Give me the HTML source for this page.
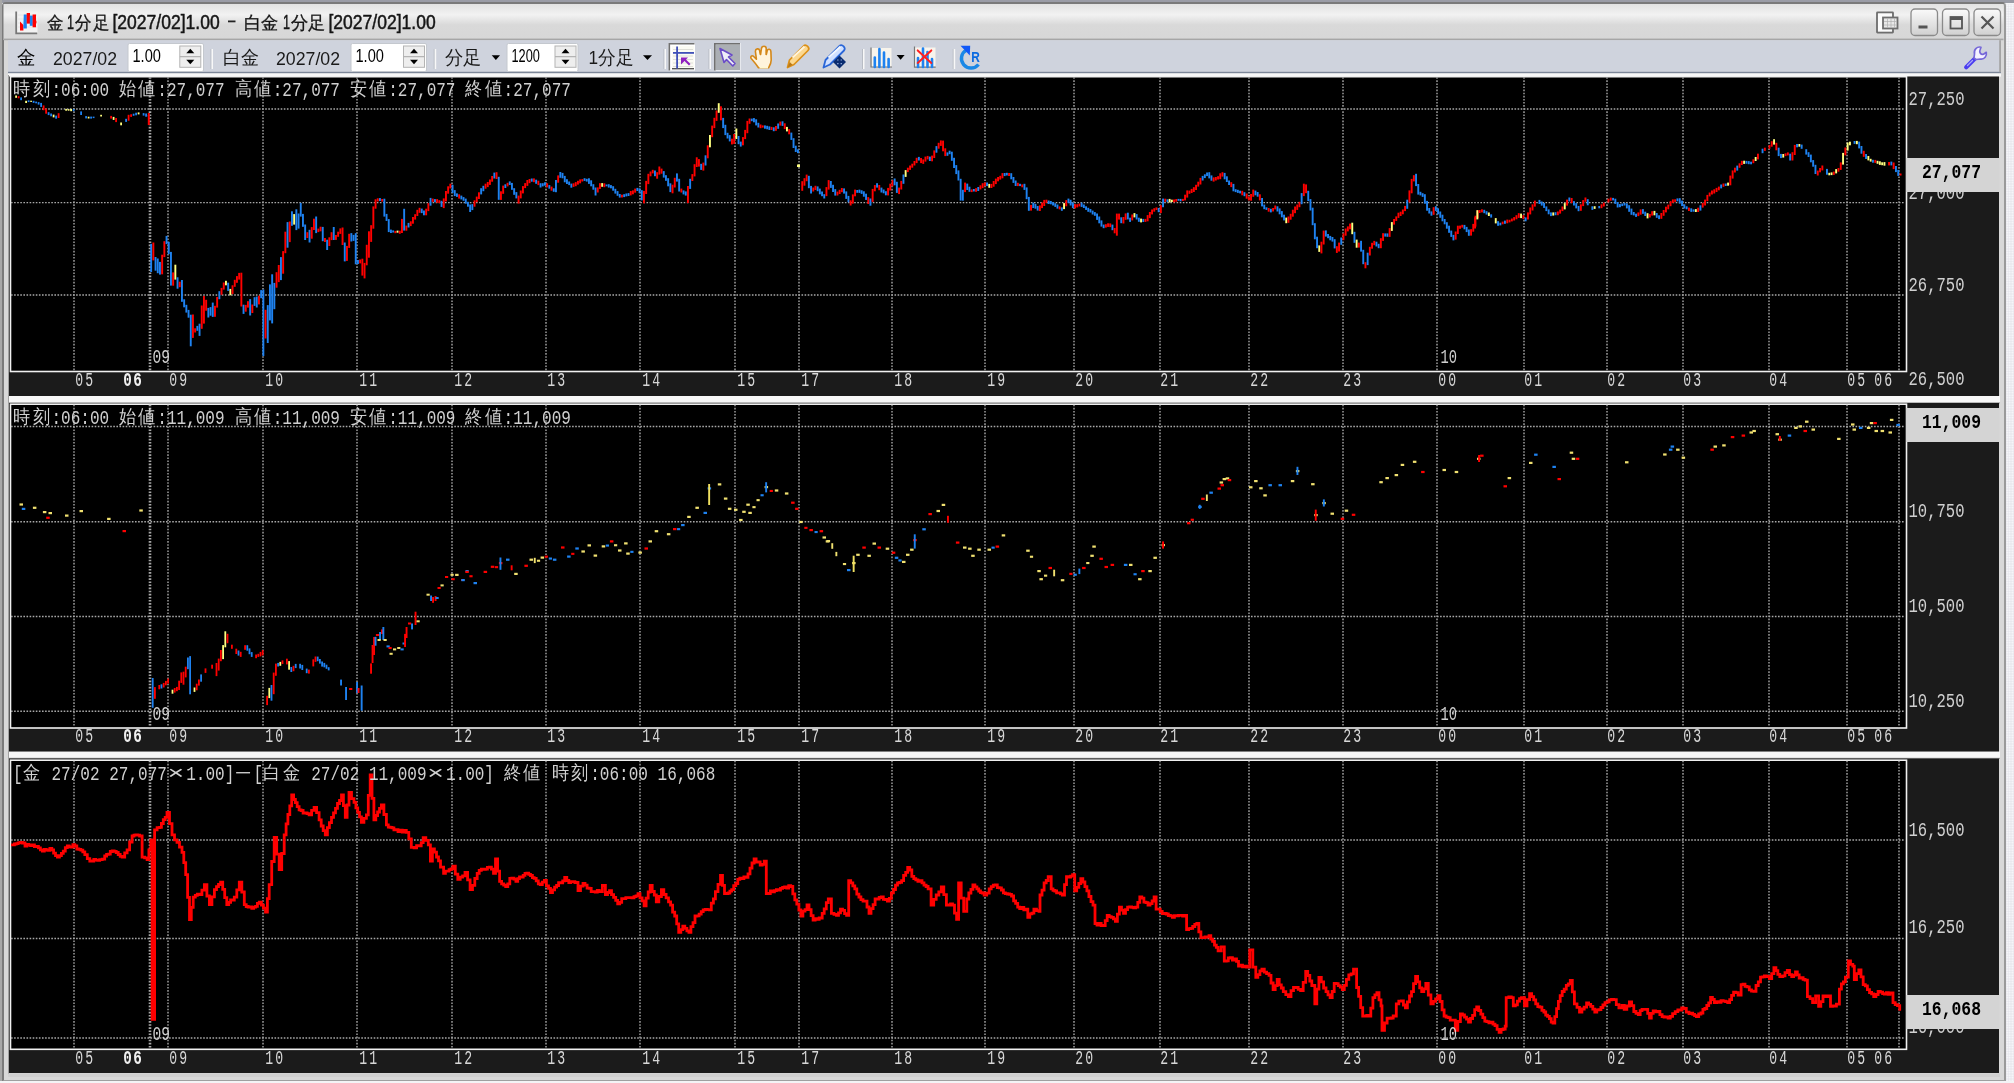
<!DOCTYPE html>
<html><head><meta charset="utf-8">
<style>
html,body{margin:0;padding:0;}
body{width:2014px;height:1083px;position:relative;overflow:hidden;background:#f4f4f6;font-family:"Liberation Sans",sans-serif;}
.abs{position:absolute;}
#topband{left:0;top:0;width:2014px;height:3px;background:#9a9ca6;}
#leftband{left:0;top:0;width:2px;height:1081px;background:#a8a8a8;}
#rightpat{left:2006px;top:4px;width:8px;height:1077px;background-color:#e8e8ee;background-image:radial-gradient(circle,#ffffff 0.7px,transparent 0.9px);background-size:2.5px 2.5px;}
#win{left:1.5px;top:2px;width:2000.5px;height:1076px;background:#d8d8d8;border-left:2px solid #7a7a7a;border-top:2px solid #7a7a7a;border-right:2px solid #9a9a9a;border-bottom:1.5px solid #a0a0a0;border-radius:4px 4px 0 0;}
#title{left:3px;top:3px;width:2000px;height:36px;background:linear-gradient(#f6f6f6,#e4e4e4 50%,#d6d6d6);border-radius:4px 4px 0 0;}
#toolbar{left:8px;top:40px;width:1993px;height:33px;background:#d1d5dd;border-top:1px solid #a9acb3;border-bottom:2px solid #8f96a6;box-sizing:border-box;}
.ax,.sc,.pl,.info,.mk{font-family:"Liberation Mono",monospace;}
.g{stroke:#a8a8a8;stroke-width:1.4;stroke-dasharray:1.6 1.5;}
.ax{fill:#d8d8d8;font-size:20px;}
.bd{font-weight:bold;fill:#f0f0f0;}
.sc{fill:#d0d0d0;font-size:21px;}
.pl{fill:#000;font-size:21px;font-weight:bold;}
.info{fill:#d0d0d0;font-size:21px;}
.mk{fill:#d0d0d0;font-size:21px;}
</style></head><body>
<div id="topband" class="abs"></div>
<div id="leftband" class="abs"></div>
<div id="win" class="abs"></div>
<div id="rightpat" class="abs"></div>
<svg class="abs" style="left:0;top:0;will-change:transform" width="2014" height="1083" viewBox="0 0 2014 1083">
<defs><clipPath id="c1"><rect x="11" y="77" width="1895" height="294"/></clipPath>
<clipPath id="c2"><rect x="11" y="405" width="1895" height="322"/></clipPath>
<clipPath id="c3"><rect x="11" y="762" width="1895" height="286"/></clipPath></defs>
<defs><linearGradient id="tg" x1="0" y1="0" x2="0" y2="1"><stop offset="0" stop-color="#e2e2e2"/><stop offset="0.3" stop-color="#f2f2f2"/><stop offset="0.58" stop-color="#d9d9d9"/><stop offset="1" stop-color="#d7d7d7"/></linearGradient><linearGradient id="bg" x1="0" y1="0" x2="0" y2="1"><stop offset="0" stop-color="#fafafa"/><stop offset="1" stop-color="#d0d0d0"/></linearGradient></defs>
<rect x="3.5" y="4" width="2000" height="36" fill="url(#tg)"/>
<rect x="16" y="11.5" width="21.5" height="21.5" fill="#f2f2f2"/><path d="M18,15 H37 M18,19 H37 M18,23 H37 M18,27 H37" stroke="#e0e0e0" stroke-width="0.8"/><path d="M16.2,11.5 V33.3 H37.2" fill="none" stroke="#777" stroke-width="1.8"/><path d="M20,30.6 L20,21.5 L23.4,25 L23.4,30.6 Z" fill="#ff0000"/><path d="M23.3,28.6 L23.8,14.6 L26.8,14.6 L26.8,28.6 Z" fill="#1a82f0"/><rect x="26.7" y="13" width="3.3" height="10.6" fill="#ff0000"/><rect x="29.8" y="15.6" width="3" height="10.2" fill="#1a82f0"/><path d="M32.6,14.4 H36 V20 L36.6,22 L36,24 V27.2 H32.6 Z" fill="#ff0000"/>
<text x="47" y="28.6" style="font-family:'Liberation Sans'" font-size="18" fill="#151515" font-weight="normal" text-anchor="start" textLength="16.5" lengthAdjust="spacingAndGlyphs" stroke="#151515" stroke-width="0.3">金</text>
<text x="67" y="28.6" style="font-family:'Liberation Sans'" font-size="20.5" fill="#151515" font-weight="normal" text-anchor="start" textLength="7.0" lengthAdjust="spacingAndGlyphs" stroke="#151515" stroke-width="0.5">1</text>
<text x="75" y="28.6" style="font-family:'Liberation Sans'" font-size="18" fill="#151515" font-weight="normal" text-anchor="start" textLength="16.5" lengthAdjust="spacingAndGlyphs" stroke="#151515" stroke-width="0.3">分</text>
<text x="92.5" y="28.6" style="font-family:'Liberation Sans'" font-size="18" fill="#151515" font-weight="normal" text-anchor="start" textLength="16.5" lengthAdjust="spacingAndGlyphs" stroke="#151515" stroke-width="0.3">足</text>
<text x="112.5" y="28.6" style="font-family:'Liberation Sans'" font-size="20.5" fill="#151515" font-weight="normal" text-anchor="start" textLength="107.2" lengthAdjust="spacingAndGlyphs" stroke="#151515" stroke-width="0.5">[2027/02]1.00</text>
<rect x="228" y="20.5" width="7.5" height="1.8" fill="#222"/>
<text x="244" y="28.6" style="font-family:'Liberation Sans'" font-size="18" fill="#151515" font-weight="normal" text-anchor="start" textLength="34.5" lengthAdjust="spacingAndGlyphs" stroke="#151515" stroke-width="0.3">白金</text>
<text x="283" y="28.6" style="font-family:'Liberation Sans'" font-size="20.5" fill="#151515" font-weight="normal" text-anchor="start" textLength="7.0" lengthAdjust="spacingAndGlyphs" stroke="#151515" stroke-width="0.5">1</text>
<text x="290.5" y="28.6" style="font-family:'Liberation Sans'" font-size="18" fill="#151515" font-weight="normal" text-anchor="start" textLength="34.5" lengthAdjust="spacingAndGlyphs" stroke="#151515" stroke-width="0.3">分足</text>
<text x="328.5" y="28.6" style="font-family:'Liberation Sans'" font-size="20.5" fill="#151515" font-weight="normal" text-anchor="start" textLength="107.2" lengthAdjust="spacingAndGlyphs" stroke="#151515" stroke-width="0.5">[2027/02]1.00</text>
<g fill="none" stroke="#6e6e6e" stroke-width="1.8"><rect x="1877" y="12.5" width="16" height="20" rx="0.5"/></g><rect x="1878" y="13.5" width="14" height="18" fill="#fbfbfb"/><rect x="1883" y="17.5" width="14.5" height="11" fill="#e8e8e8" stroke="#6e6e6e" stroke-width="1.8"/><path d="M1884,21.5 H1897 M1884,25 H1897 M1887.5,18.5 V28 M1891,18.5 V28 M1894.5,18.5 V28" stroke="#b0b0b0" stroke-width="0.7"/>
<rect x="1911" y="9" width="26.5" height="26.5" rx="4" fill="url(#bg)" stroke="#8a8a8a" stroke-width="1.3"/>
<rect x="1942.5" y="9" width="26.5" height="26.5" rx="4" fill="url(#bg)" stroke="#8a8a8a" stroke-width="1.3"/>
<rect x="1974" y="9" width="26.5" height="26.5" rx="4" fill="url(#bg)" stroke="#8a8a8a" stroke-width="1.3"/>
<rect x="1918.5" y="25.5" width="9" height="3" fill="#555"/>
<rect x="1950.5" y="17" width="11.5" height="11.5" fill="none" stroke="#555" stroke-width="1.8"/><rect x="1950.5" y="17" width="11.5" height="3" fill="#555"/>
<path d="M1981.5,16.5 L1993.5,28.5 M1993.5,16.5 L1981.5,28.5" stroke="#555" stroke-width="2.2"/>
<rect x="3.5" y="38.6" width="2000" height="1.6" fill="#a6a6a6"/>
<rect x="8" y="40.2" width="1993" height="31.8" fill="#cfd3dd"/>
<rect x="8" y="71.8" width="1993" height="1.6" fill="#7c8698"/>
<rect x="8" y="73.4" width="1993" height="3.2" fill="#f8f8f8"/>
<text x="17" y="63.8" style="font-family:'Liberation Sans'" font-size="18.5" fill="#000" font-weight="normal" text-anchor="start" textLength="18.5" lengthAdjust="spacingAndGlyphs">金</text>
<text x="53" y="64.8" style="font-family:'Liberation Sans'" font-size="18" fill="#1a1a1a" font-weight="normal" text-anchor="start" textLength="64.0" lengthAdjust="spacingAndGlyphs">2027/02</text>
<rect x="128.0" y="43.5" width="75.5" height="28" rx="1.5" fill="#ffffff" stroke="#c4c8ce" stroke-width="1"/><text x="132.5" y="61.8" style="font-family:'Liberation Sans'" font-size="19" fill="#000" font-weight="normal" text-anchor="start" textLength="28.4" lengthAdjust="spacingAndGlyphs">1.00</text><rect x="179.8" y="46" width="21" height="21.3" fill="#eeeeee" stroke="#b4b4b4" stroke-width="1"/><line x1="179.8" y1="56.65" x2="200.8" y2="56.65" stroke="#b0b0b0" stroke-width="1.2"/><path d="M186.3,53.15 L194.3,53.15 L190.3,48.65 Z" fill="#000"/><path d="M186.3,59.65 L194.3,59.65 L190.3,64.15 Z" fill="#000"/>
<rect x="210.5" y="49" width="1" height="20" fill="#b8bcc4"/><rect x="211.5" y="49" width="1.5" height="20" fill="#f8f8f8"/>
<text x="223" y="63.8" style="font-family:'Liberation Sans'" font-size="18.5" fill="#1a1a1a" font-weight="normal" text-anchor="start" textLength="36.0" lengthAdjust="spacingAndGlyphs">白金</text>
<text x="276" y="64.8" style="font-family:'Liberation Sans'" font-size="18" fill="#1a1a1a" font-weight="normal" text-anchor="start" textLength="64.0" lengthAdjust="spacingAndGlyphs">2027/02</text>
<rect x="351.0" y="43.5" width="75.5" height="28" rx="1.5" fill="#ffffff" stroke="#c4c8ce" stroke-width="1"/><text x="355.5" y="61.8" style="font-family:'Liberation Sans'" font-size="19" fill="#000" font-weight="normal" text-anchor="start" textLength="28.4" lengthAdjust="spacingAndGlyphs">1.00</text><rect x="403.5" y="46" width="21" height="21.3" fill="#eeeeee" stroke="#b4b4b4" stroke-width="1"/><line x1="403.5" y1="56.65" x2="424.5" y2="56.65" stroke="#b0b0b0" stroke-width="1.2"/><path d="M410.0,53.15 L418.0,53.15 L414.0,48.65 Z" fill="#000"/><path d="M410.0,59.65 L418.0,59.65 L414.0,64.15 Z" fill="#000"/>
<rect x="433.7" y="49" width="1" height="20" fill="#b8bcc4"/><rect x="434.7" y="49" width="1.5" height="20" fill="#f8f8f8"/>
<text x="445" y="63.8" style="font-family:'Liberation Sans'" font-size="18.5" fill="#1a1a1a" font-weight="normal" text-anchor="start" textLength="36.5" lengthAdjust="spacingAndGlyphs">分足</text>
<path d="M491.7,55.2 L500,55.2 L495.85,60 Z" fill="#000"/>
<rect x="507.0" y="43.5" width="71.0" height="28" rx="1.5" fill="#ffffff" stroke="#c4c8ce" stroke-width="1"/><text x="511.5" y="61.8" style="font-family:'Liberation Sans'" font-size="19" fill="#000" font-weight="normal" text-anchor="start" textLength="28.4" lengthAdjust="spacingAndGlyphs">1200</text><rect x="555" y="46" width="21" height="21.3" fill="#eeeeee" stroke="#b4b4b4" stroke-width="1"/><line x1="555" y1="56.65" x2="576" y2="56.65" stroke="#b0b0b0" stroke-width="1.2"/><path d="M561.5,53.15 L569.5,53.15 L565.5,48.65 Z" fill="#000"/><path d="M561.5,59.65 L569.5,59.65 L565.5,64.15 Z" fill="#000"/>
<text x="588.5" y="63.8" style="font-family:'Liberation Sans'" font-size="18.5" fill="#1a1a1a" font-weight="normal" text-anchor="start" textLength="45.0" lengthAdjust="spacingAndGlyphs">1分足</text>
<path d="M643,55.2 L652,55.2 L647.5,60 Z" fill="#000"/>
<rect x="663.5" y="49" width="1" height="20" fill="#b8bcc4"/><rect x="664.5" y="49" width="1.5" height="20" fill="#f8f8f8"/>
<rect x="668.5" y="43" width="26.5" height="27.5" fill="#ffffff"/><path d="M669.3,70.5 V43.8 H694.5" fill="none" stroke="#707070" stroke-width="1.6"/><rect x="672" y="46" width="22" height="22.5" fill="#fbfbf4"/><path d="M673,49.5 H693 M673,56 H693 M673,59.5 H693 M673,63 H693 M673,66.5 H693" stroke="#d8d8d0" stroke-width="0.8"/><rect x="672" y="68" width="22" height="1.4" fill="#555"/><rect x="676.2" y="46.5" width="1.8" height="22" fill="#4050b8"/><rect x="673" y="52" width="21" height="1.8" fill="#4050b8"/><path d="M681,57.5 L688,57.5 L686,59.5 L690.5,64 L689,65.5 L684.5,61 L681,64.5 Z" fill="#9020c0"/>
<rect x="708.5" y="49" width="1" height="20" fill="#b8bcc4"/><rect x="709.5" y="49" width="1.5" height="20" fill="#f8f8f8"/>
<rect x="714" y="43" width="26.5" height="27.5" fill="#ffffff"/><rect x="715.5" y="44.5" width="24.5" height="25.5" fill="#abafb4"/><path d="M714.8,70.5 V43.8 H740" fill="none" stroke="#707070" stroke-width="1.6"/><path d="M720,48.5 L732,55 L728.5,57 L735,63.5 L732.8,66 L726.5,59.5 L724,62.5 Z" fill="#eeeef8" stroke="#6a4cc8" stroke-width="1.6" stroke-linejoin="round"/>
<path d="M758.5,67.8 C756,64 753,60.5 751.2,58.5 C750.2,57 751.5,55 753.4,56.2 L756.4,59.2 L755.4,51.5 C755.2,48.3 759.2,48 759.6,50.6 L760.6,54.5 L761.4,48.6 C761.8,45.4 766.2,45.4 766.2,48.6 L766.3,54.5 L767.2,50.8 C767.8,48.4 771,48.8 770.9,51.6 L771.2,60 C771.2,63 770,65.5 768.6,67.8 Z" fill="#fff4dc" stroke="#d4881a" stroke-width="1.6" stroke-linejoin="round"/><path d="M760.4,55 L759.8,50.8 M766.2,55 L766.3,50" stroke="#d4881a" stroke-width="1.1"/><rect x="759.5" y="66.8" width="8.5" height="1.6" fill="#fff8d0"/>
<path d="M787.5,67.5 L789.5,60 L803.5,46 C806,43.5 810.5,48 808,50.5 L794,64.5 Z" fill="#fcd890" stroke="#dc9018" stroke-width="1.7" stroke-linejoin="round"/><path d="M792.5,57.5 L804.5,46.5" stroke="#fff4dc" stroke-width="1.8"/><path d="M787.5,67.5 L789.8,62 L792.5,64.7 Z" fill="#b87818"/>
<path d="M823.5,67.5 L825.5,60 L839.5,46 C842,43.5 846.5,48 844,50.5 L830,64.5 Z" fill="#d0e0ff" stroke="#2a66d8" stroke-width="1.8" stroke-linejoin="round"/><path d="M828.5,57.5 L840.5,46.5" stroke="#f4f8ff" stroke-width="1.8"/><path d="M839.5,55.5 L846,62 L839.5,68.5 L833,62 Z" fill="#0a2c70"/><path d="M837.2,60 h1.3 M840.6,60 h1.3 M837.2,63.6 h1.3 M840.6,63.6 h1.3" stroke="#9ab0e0" stroke-width="1.1"/>
<rect x="862" y="49" width="1" height="20" fill="#b8bcc4"/><rect x="863" y="49" width="1.5" height="20" fill="#f8f8f8"/>
<rect x="871.5" y="48" width="20" height="19" fill="#f8f4ec"/><path d="M871,47.5 V67 H892" fill="none" stroke="#777" stroke-width="1.2"/><path d="M874.8,67 V57.5 M879.4,67 V49 M884,67 V52.5 M888.6,67 V59" stroke="#1e82f0" stroke-width="2.6" stroke-linecap="round"/>
<path d="M896.6,55 L904.6,55 L900.6,59.8 Z" fill="#000"/>
<rect x="915" y="47.5" width="20.5" height="19.5" fill="#f8f4ec"/><path d="M914.5,46.5 V67.2 H935.7" fill="none" stroke="#777" stroke-width="1.2"/><path d="M918,67 V58 M923,67 V48.5 M927.5,67 V52 M932,67 V59" stroke="#1e82f0" stroke-width="2.6" stroke-linecap="round"/><path d="M917.7,50.4 L931.3,62.9 M931.3,50.4 L917.7,62.9" stroke="#ff2020" stroke-width="2" stroke-linecap="round"/>
<rect x="952.7" y="49" width="1" height="20" fill="#b8bcc4"/><rect x="953.7" y="49" width="1.5" height="20" fill="#f8f8f8"/>
<path d="M966.5,50 A9.6,9.6 0 1 0 978.5,64.5" fill="none" stroke="#1a88e6" stroke-width="3.4"/><path d="M960.5,45.8 L970.2,45.8 L969.8,55.5 Z" fill="#1058f8"/><text x="971.2" y="61.8" style="font-family:'Liberation Sans'" font-size="15.5" fill="#0a6ae0" font-weight="bold" text-anchor="start" textLength="8.6" lengthAdjust="spacingAndGlyphs">R</text>
<path d="M1966.2,67.2 L1975.5,58" stroke="#4a3cf0" stroke-width="4.2" stroke-linecap="round"/><path d="M1967.5,65.5 L1972.5,60.5" stroke="#a8a4f8" stroke-width="1.3" stroke-linecap="round"/><path d="M1981,47.2 C1977,46.2 1973.5,49.5 1974.5,54 L1974,58 L1976,59.5 L1980.5,59 C1984.5,59.5 1987,56 1986.3,52.3 L1983.5,54.2 C1981,55 1979,52.5 1980,50 Z" fill="#f4f2ff" stroke="#7668d8" stroke-width="1.7" stroke-linejoin="round"/>
<rect x="1999.2" y="40.2" width="1.8" height="32" fill="#a4a4a4"/>
<rect x="9" y="396" width="1991" height="7" fill="#f8f8f8"/><rect x="9" y="402.3" width="1991" height="1.2" fill="#a0a0a0"/>
<rect x="9" y="751.5" width="1991" height="7" fill="#f8f8f8"/><rect x="9" y="757.8" width="1991" height="1.2" fill="#a0a0a0"/>
<rect x="8" y="75" width="1" height="1000" fill="#a0a0a0"/><rect x="8" y="1073.5" width="1992" height="3.5" fill="#d0d0d0"/>
<rect x="9" y="76.5" width="1990" height="319.5" fill="#1b1b1b"/>
<rect x="10.5" y="76.7" width="1896" height="294.8" fill="#000" stroke="#f0f0f0" stroke-width="1.6"/>
<line x1="11" y1="109" x2="1905" y2="109" class="g"/>
<line x1="11" y1="202.6" x2="1905" y2="202.6" class="g"/>
<line x1="11" y1="295" x2="1905" y2="295" class="g"/>
<line x1="74" y1="77.2" x2="74" y2="371" class="g"/>
<line x1="150" y1="77.2" x2="150" y2="371" class="g" style="stroke-width:2.6"/>
<line x1="168" y1="77.2" x2="168" y2="371" class="g"/>
<line x1="263" y1="77.2" x2="263" y2="371" class="g"/>
<line x1="357" y1="77.2" x2="357" y2="371" class="g"/>
<line x1="452" y1="77.2" x2="452" y2="371" class="g"/>
<line x1="546" y1="77.2" x2="546" y2="371" class="g"/>
<line x1="640" y1="77.2" x2="640" y2="371" class="g"/>
<line x1="735" y1="77.2" x2="735" y2="371" class="g"/>
<line x1="799" y1="77.2" x2="799" y2="371" class="g"/>
<line x1="892" y1="77.2" x2="892" y2="371" class="g"/>
<line x1="985" y1="77.2" x2="985" y2="371" class="g"/>
<line x1="1074" y1="77.2" x2="1074" y2="371" class="g"/>
<line x1="1160" y1="77.2" x2="1160" y2="371" class="g"/>
<line x1="1249" y1="77.2" x2="1249" y2="371" class="g"/>
<line x1="1343" y1="77.2" x2="1343" y2="371" class="g"/>
<line x1="1437" y1="77.2" x2="1437" y2="371" class="g"/>
<line x1="1524" y1="77.2" x2="1524" y2="371" class="g"/>
<line x1="1607" y1="77.2" x2="1607" y2="371" class="g"/>
<line x1="1683" y1="77.2" x2="1683" y2="371" class="g"/>
<line x1="1769" y1="77.2" x2="1769" y2="371" class="g"/>
<line x1="1847" y1="77.2" x2="1847" y2="371" class="g"/>
<line x1="1899" y1="77.2" x2="1899" y2="371" class="g"/>
<rect x="9" y="403" width="1990" height="348.5" fill="#1b1b1b"/>
<rect x="10.5" y="404.2" width="1896" height="323.8" fill="#000" stroke="#f0f0f0" stroke-width="1.6"/>
<line x1="11" y1="426.5" x2="1905" y2="426.5" class="g"/>
<line x1="11" y1="521.7" x2="1905" y2="521.7" class="g"/>
<line x1="11" y1="616.5" x2="1905" y2="616.5" class="g"/>
<line x1="11" y1="711.3" x2="1905" y2="711.3" class="g"/>
<line x1="74" y1="404.7" x2="74" y2="727.5" class="g"/>
<line x1="150" y1="404.7" x2="150" y2="727.5" class="g" style="stroke-width:2.6"/>
<line x1="168" y1="404.7" x2="168" y2="727.5" class="g"/>
<line x1="263" y1="404.7" x2="263" y2="727.5" class="g"/>
<line x1="357" y1="404.7" x2="357" y2="727.5" class="g"/>
<line x1="452" y1="404.7" x2="452" y2="727.5" class="g"/>
<line x1="546" y1="404.7" x2="546" y2="727.5" class="g"/>
<line x1="640" y1="404.7" x2="640" y2="727.5" class="g"/>
<line x1="735" y1="404.7" x2="735" y2="727.5" class="g"/>
<line x1="799" y1="404.7" x2="799" y2="727.5" class="g"/>
<line x1="892" y1="404.7" x2="892" y2="727.5" class="g"/>
<line x1="985" y1="404.7" x2="985" y2="727.5" class="g"/>
<line x1="1074" y1="404.7" x2="1074" y2="727.5" class="g"/>
<line x1="1160" y1="404.7" x2="1160" y2="727.5" class="g"/>
<line x1="1249" y1="404.7" x2="1249" y2="727.5" class="g"/>
<line x1="1343" y1="404.7" x2="1343" y2="727.5" class="g"/>
<line x1="1437" y1="404.7" x2="1437" y2="727.5" class="g"/>
<line x1="1524" y1="404.7" x2="1524" y2="727.5" class="g"/>
<line x1="1607" y1="404.7" x2="1607" y2="727.5" class="g"/>
<line x1="1683" y1="404.7" x2="1683" y2="727.5" class="g"/>
<line x1="1769" y1="404.7" x2="1769" y2="727.5" class="g"/>
<line x1="1847" y1="404.7" x2="1847" y2="727.5" class="g"/>
<line x1="1899" y1="404.7" x2="1899" y2="727.5" class="g"/>
<rect x="9" y="758.5" width="1990" height="314.5" fill="#1b1b1b"/>
<rect x="10.5" y="760.2" width="1896" height="289.0999999999999" fill="#000" stroke="#f0f0f0" stroke-width="1.6"/>
<line x1="11" y1="840" x2="1905" y2="840" class="g"/>
<line x1="11" y1="938.5" x2="1905" y2="938.5" class="g"/>
<line x1="11" y1="1038" x2="1905" y2="1038" class="g"/>
<line x1="74" y1="760.7" x2="74" y2="1048.8" class="g"/>
<line x1="150" y1="760.7" x2="150" y2="1048.8" class="g" style="stroke-width:2.6"/>
<line x1="168" y1="760.7" x2="168" y2="1048.8" class="g"/>
<line x1="263" y1="760.7" x2="263" y2="1048.8" class="g"/>
<line x1="357" y1="760.7" x2="357" y2="1048.8" class="g"/>
<line x1="452" y1="760.7" x2="452" y2="1048.8" class="g"/>
<line x1="546" y1="760.7" x2="546" y2="1048.8" class="g"/>
<line x1="640" y1="760.7" x2="640" y2="1048.8" class="g"/>
<line x1="735" y1="760.7" x2="735" y2="1048.8" class="g"/>
<line x1="799" y1="760.7" x2="799" y2="1048.8" class="g"/>
<line x1="892" y1="760.7" x2="892" y2="1048.8" class="g"/>
<line x1="985" y1="760.7" x2="985" y2="1048.8" class="g"/>
<line x1="1074" y1="760.7" x2="1074" y2="1048.8" class="g"/>
<line x1="1160" y1="760.7" x2="1160" y2="1048.8" class="g"/>
<line x1="1249" y1="760.7" x2="1249" y2="1048.8" class="g"/>
<line x1="1343" y1="760.7" x2="1343" y2="1048.8" class="g"/>
<line x1="1437" y1="760.7" x2="1437" y2="1048.8" class="g"/>
<line x1="1524" y1="760.7" x2="1524" y2="1048.8" class="g"/>
<line x1="1607" y1="760.7" x2="1607" y2="1048.8" class="g"/>
<line x1="1683" y1="760.7" x2="1683" y2="1048.8" class="g"/>
<line x1="1769" y1="760.7" x2="1769" y2="1048.8" class="g"/>
<line x1="1847" y1="760.7" x2="1847" y2="1048.8" class="g"/>
<line x1="1899" y1="760.7" x2="1899" y2="1048.8" class="g"/>
<g><rect x="15.2" y="95.5" width="1.8" height="2.3" fill="#ffff80"/><rect x="17.7" y="96.2" width="1.8" height="2.1" fill="#ff0000"/><rect x="20.2" y="97.4" width="1.8" height="2.8" fill="#1e82f0"/><rect x="25.2" y="100.8" width="1.8" height="2.2" fill="#ffff80"/><rect x="27.7" y="100.3" width="1.8" height="1.8" fill="#1e82f0"/><rect x="30.2" y="100.7" width="1.8" height="1.2" fill="#ffff80"/><rect x="32.7" y="100.8" width="1.8" height="2.1" fill="#1e82f0"/><rect x="35.2" y="101.6" width="1.8" height="1.7" fill="#1e82f0"/><rect x="37.7" y="102.1" width="1.8" height="2.5" fill="#1e82f0"/><rect x="40.2" y="102.9" width="1.8" height="4.0" fill="#1e82f0"/><rect x="42.7" y="105.4" width="1.8" height="4.8" fill="#ff0000"/><rect x="45.2" y="108.5" width="1.8" height="5.2" fill="#ff0000"/><rect x="47.7" y="112.2" width="1.8" height="2.9" fill="#1e82f0"/><rect x="50.2" y="113.5" width="1.8" height="2.8" fill="#1e82f0"/><rect x="52.7" y="114.6" width="1.8" height="2.8" fill="#ffff80"/><rect x="55.2" y="115.6" width="1.8" height="3.1" fill="#1e82f0"/><rect x="57.7" y="113.2" width="1.8" height="4.8" fill="#ff0000"/><rect x="65.2" y="108.9" width="1.8" height="1.8" fill="#ffff80"/><rect x="67.7" y="109.1" width="1.8" height="1.6" fill="#ffff80"/><rect x="70.2" y="108.9" width="1.8" height="2.3" fill="#ffff80"/><rect x="72.7" y="109.0" width="1.8" height="2.1" fill="#1e82f0"/><rect x="80.2" y="111.4" width="1.8" height="3.6" fill="#1e82f0"/><rect x="85.2" y="116.1" width="1.8" height="2.3" fill="#1e82f0"/><rect x="87.7" y="116.7" width="1.8" height="1.8" fill="#ffff80"/><rect x="90.2" y="116.6" width="1.8" height="2.0" fill="#1e82f0"/><rect x="92.7" y="116.6" width="1.8" height="1.5" fill="#1e82f0"/><rect x="100.2" y="114.8" width="1.8" height="1.7" fill="#ffff80"/><rect x="110.2" y="115.9" width="1.8" height="2.7" fill="#ff0000"/><rect x="112.7" y="116.9" width="1.8" height="3.0" fill="#ffff80"/><rect x="115.2" y="118.0" width="1.8" height="4.1" fill="#ff0000"/><rect x="120.2" y="122.5" width="1.8" height="2.8" fill="#ffff80"/><rect x="125.2" y="118.8" width="1.8" height="3.1" fill="#1e82f0"/><rect x="127.7" y="114.8" width="1.8" height="5.9" fill="#ff0000"/><rect x="130.2" y="114.3" width="1.8" height="2.6" fill="#ff0000"/><rect x="132.7" y="113.7" width="1.8" height="2.1" fill="#1e82f0"/><rect x="135.2" y="112.7" width="1.8" height="2.6" fill="#1e82f0"/><rect x="137.7" y="112.4" width="1.8" height="2.0" fill="#ffff80"/><rect x="142.7" y="113.1" width="1.8" height="2.5" fill="#1e82f0"/><rect x="145.2" y="113.5" width="1.8" height="3.2" fill="#1e82f0"/><rect x="147.7" y="115.1" width="1.8" height="1.4" fill="#1e82f0"/>
<rect x="147.8" y="113" width="2" height="12" fill="#ff0000"/>
<rect x="150.2" y="243.8" width="1.9" height="28.2" fill="#1e82f0"/><rect x="152.4" y="242.5" width="1.9" height="17.9" fill="#ff0000"/><rect x="154.6" y="257.0" width="1.9" height="13.7" fill="#1e82f0"/><rect x="156.8" y="258.5" width="1.9" height="14.7" fill="#1e82f0"/><rect x="159.0" y="261.9" width="1.9" height="12.7" fill="#1e82f0"/><rect x="161.2" y="254.7" width="1.9" height="19.6" fill="#ff0000"/><rect x="163.4" y="241.2" width="1.9" height="15.9" fill="#ff0000"/><rect x="165.6" y="235.9" width="1.9" height="8.2" fill="#1e82f0"/><rect x="167.8" y="241.8" width="1.9" height="12.4" fill="#1e82f0"/><rect x="170.0" y="251.9" width="1.9" height="33.7" fill="#1e82f0"/><rect x="172.2" y="272.4" width="1.9" height="13.3" fill="#ff0000"/><rect x="174.4" y="264.7" width="1.9" height="14.9" fill="#ffff80"/><rect x="176.6" y="277.3" width="1.9" height="11.4" fill="#1e82f0"/><rect x="178.8" y="281.7" width="1.9" height="5.5" fill="#ff0000"/><rect x="181.0" y="280.0" width="1.9" height="21.8" fill="#1e82f0"/><rect x="183.2" y="299.3" width="1.9" height="8.0" fill="#1e82f0"/><rect x="185.4" y="304.8" width="1.9" height="7.8" fill="#1e82f0"/><rect x="187.6" y="309.9" width="1.9" height="7.8" fill="#1e82f0"/><rect x="189.8" y="314.7" width="1.9" height="31.6" fill="#1e82f0"/><rect x="192.0" y="314.5" width="1.9" height="23.4" fill="#ff0000"/><rect x="194.2" y="328.3" width="1.9" height="4.2" fill="#ff0000"/><rect x="196.4" y="325.9" width="1.9" height="4.9" fill="#1e82f0"/><rect x="198.6" y="323.7" width="1.9" height="12.2" fill="#1e82f0"/><rect x="200.8" y="305.5" width="1.9" height="23.3" fill="#ff0000"/><rect x="203.0" y="296.0" width="1.9" height="27.6" fill="#ff0000"/><rect x="205.2" y="299.8" width="1.9" height="10.9" fill="#ff0000"/><rect x="207.4" y="307.9" width="1.9" height="9.6" fill="#1e82f0"/><rect x="209.6" y="307.1" width="1.9" height="8.6" fill="#1e82f0"/><rect x="211.8" y="302.6" width="1.9" height="14.3" fill="#1e82f0"/><rect x="214.0" y="305.8" width="1.9" height="11.0" fill="#ff0000"/><rect x="216.2" y="296.9" width="1.9" height="10.7" fill="#ff0000"/><rect x="218.4" y="291.2" width="1.9" height="8.0" fill="#1e82f0"/><rect x="220.6" y="287.9" width="1.9" height="6.9" fill="#ff0000"/><rect x="222.8" y="282.5" width="1.9" height="7.1" fill="#ff0000"/><rect x="225.0" y="280.8" width="1.9" height="4.5" fill="#ffff80"/><rect x="227.2" y="282.7" width="1.9" height="8.2" fill="#1e82f0"/><rect x="229.4" y="288.9" width="1.9" height="6.4" fill="#ffff80"/><rect x="231.6" y="285.3" width="1.9" height="8.8" fill="#ff0000"/><rect x="233.8" y="279.8" width="1.9" height="7.0" fill="#ff0000"/><rect x="236.0" y="276.1" width="1.9" height="6.7" fill="#ff0000"/><rect x="238.2" y="272.9" width="1.9" height="6.7" fill="#ff0000"/><rect x="240.4" y="272.7" width="1.9" height="33.8" fill="#ff0000"/><rect x="242.6" y="304.7" width="1.9" height="9.2" fill="#1e82f0"/><rect x="244.8" y="304.9" width="1.9" height="6.8" fill="#ff0000"/><rect x="247.0" y="301.2" width="1.9" height="6.4" fill="#ff0000"/><rect x="249.2" y="299.1" width="1.9" height="16.4" fill="#1e82f0"/><rect x="251.4" y="304.5" width="1.9" height="8.5" fill="#ff0000"/><rect x="253.6" y="297.2" width="1.9" height="8.7" fill="#1e82f0"/><rect x="255.8" y="296.5" width="1.9" height="11.0" fill="#1e82f0"/><rect x="258.0" y="295.7" width="1.9" height="8.7" fill="#ff0000"/><rect x="260.2" y="290.1" width="1.9" height="8.1" fill="#1e82f0"/><rect x="262.4" y="289.5" width="1.9" height="66.6" fill="#1e82f0"/><rect x="264.6" y="309.8" width="1.9" height="28.7" fill="#ff0000"/><rect x="266.8" y="305.1" width="1.9" height="37.9" fill="#1e82f0"/><rect x="269.0" y="284.4" width="1.9" height="36.0" fill="#1e82f0"/><rect x="271.2" y="274.3" width="1.9" height="49.1" fill="#1e82f0"/><rect x="273.4" y="282.9" width="1.9" height="26.3" fill="#1e82f0"/><rect x="275.6" y="272.2" width="1.9" height="15.5" fill="#ff0000"/><rect x="277.8" y="265.0" width="1.9" height="17.1" fill="#ff0000"/><rect x="280.0" y="257.1" width="1.9" height="23.0" fill="#1e82f0"/><rect x="282.2" y="251.1" width="1.9" height="22.6" fill="#ff0000"/><rect x="284.4" y="231.7" width="1.9" height="21.5" fill="#ff0000"/><rect x="286.6" y="222.1" width="1.9" height="25.6" fill="#1e82f0"/><rect x="288.8" y="221.5" width="1.9" height="20.6" fill="#ff0000"/><rect x="291.0" y="211.3" width="1.9" height="14.5" fill="#1e82f0"/><rect x="293.2" y="214.1" width="1.9" height="10.5" fill="#ffff80"/><rect x="295.4" y="209.3" width="1.9" height="20.8" fill="#1e82f0"/><rect x="297.6" y="213.5" width="1.9" height="15.1" fill="#1e82f0"/><rect x="299.8" y="202.9" width="1.9" height="13.7" fill="#1e82f0"/><rect x="302.0" y="213.9" width="1.9" height="12.9" fill="#1e82f0"/><rect x="304.2" y="224.5" width="1.9" height="15.5" fill="#1e82f0"/><rect x="306.4" y="232.2" width="1.9" height="5.8" fill="#ff0000"/><rect x="308.6" y="229.8" width="1.9" height="12.7" fill="#1e82f0"/><rect x="310.8" y="227.1" width="1.9" height="11.6" fill="#ff0000"/><rect x="313.0" y="218.7" width="1.9" height="11.3" fill="#ff0000"/><rect x="315.2" y="216.5" width="1.9" height="16.6" fill="#1e82f0"/><rect x="317.4" y="228.6" width="1.9" height="3.5" fill="#ff0000"/><rect x="319.6" y="226.7" width="1.9" height="4.6" fill="#ff0000"/><rect x="321.8" y="226.9" width="1.9" height="14.3" fill="#1e82f0"/><rect x="324.0" y="238.0" width="1.9" height="4.0" fill="#ff0000"/><rect x="326.2" y="239.7" width="1.9" height="10.3" fill="#1e82f0"/><rect x="328.4" y="237.3" width="1.9" height="8.7" fill="#ff0000"/><rect x="330.6" y="232.2" width="1.9" height="7.9" fill="#ff0000"/><rect x="332.8" y="227.0" width="1.9" height="13.0" fill="#1e82f0"/><rect x="335.0" y="235.0" width="1.9" height="4.9" fill="#ff0000"/><rect x="337.2" y="231.7" width="1.9" height="5.1" fill="#ff0000"/><rect x="339.4" y="228.4" width="1.9" height="5.5" fill="#ff0000"/><rect x="341.6" y="227.5" width="1.9" height="17.5" fill="#ff0000"/><rect x="343.8" y="242.5" width="1.9" height="18.9" fill="#1e82f0"/><rect x="346.0" y="245.9" width="1.9" height="15.0" fill="#ff0000"/><rect x="348.2" y="233.8" width="1.9" height="14.1" fill="#ff0000"/><rect x="350.4" y="233.1" width="1.9" height="8.4" fill="#1e82f0"/><rect x="352.6" y="234.9" width="1.9" height="6.0" fill="#1e82f0"/><rect x="354.8" y="233.2" width="1.9" height="31.1" fill="#1e82f0"/><rect x="357.0" y="260.0" width="1.9" height="4.0" fill="#1e82f0"/><rect x="359.2" y="259.5" width="1.9" height="3.9" fill="#ff0000"/><rect x="361.4" y="258.7" width="1.9" height="16.9" fill="#ff0000"/><rect x="363.6" y="262.9" width="1.9" height="15.5" fill="#ff0000"/><rect x="365.8" y="244.8" width="1.9" height="20.5" fill="#ff0000"/><rect x="368.0" y="231.3" width="1.9" height="26.4" fill="#ff0000"/><rect x="370.2" y="225.2" width="1.9" height="16.7" fill="#ff0000"/><rect x="372.4" y="206.4" width="1.9" height="22.3" fill="#ff0000"/><rect x="374.6" y="199.3" width="1.9" height="9.4" fill="#ff0000"/><rect x="376.8" y="198.3" width="1.9" height="3.2" fill="#ff0000"/><rect x="379.0" y="198.1" width="1.9" height="2.9" fill="#1e82f0"/><rect x="381.2" y="199.0" width="1.9" height="2.6" fill="#ff0000"/><rect x="383.4" y="198.7" width="1.9" height="17.9" fill="#1e82f0"/><rect x="385.6" y="213.9" width="1.9" height="7.0" fill="#1e82f0"/><rect x="387.8" y="219.1" width="1.9" height="13.0" fill="#1e82f0"/><rect x="390.0" y="229.6" width="1.9" height="3.4" fill="#1e82f0"/><rect x="392.2" y="230.4" width="1.9" height="2.1" fill="#1e82f0"/><rect x="394.4" y="230.9" width="1.9" height="2.3" fill="#ff0000"/><rect x="396.6" y="230.6" width="1.9" height="2.1" fill="#ffff80"/><rect x="398.8" y="230.7" width="1.9" height="3.1" fill="#ff0000"/><rect x="401.0" y="218.9" width="1.9" height="14.1" fill="#ff0000"/><rect x="403.2" y="208.8" width="1.9" height="21.8" fill="#1e82f0"/><rect x="405.4" y="225.6" width="1.9" height="5.1" fill="#ff0000"/><rect x="407.6" y="222.9" width="1.9" height="4.6" fill="#1e82f0"/><rect x="409.8" y="221.3" width="1.9" height="4.8" fill="#ff0000"/><rect x="412.0" y="217.0" width="1.9" height="6.7" fill="#ff0000"/><rect x="414.2" y="214.2" width="1.9" height="5.4" fill="#ff0000"/><rect x="416.4" y="209.8" width="1.9" height="6.2" fill="#ff0000"/><rect x="418.6" y="207.8" width="1.9" height="5.0" fill="#ff0000"/><rect x="420.8" y="208.6" width="1.9" height="4.5" fill="#1e82f0"/><rect x="423.0" y="210.5" width="1.9" height="4.8" fill="#1e82f0"/><rect x="425.2" y="208.7" width="1.9" height="6.6" fill="#ff0000"/><rect x="427.4" y="203.1" width="1.9" height="8.0" fill="#ff0000"/><rect x="429.6" y="197.9" width="1.9" height="7.8" fill="#1e82f0"/><rect x="431.8" y="198.6" width="1.9" height="3.3" fill="#ff0000"/><rect x="434.0" y="199.1" width="1.9" height="3.1" fill="#1e82f0"/><rect x="436.2" y="199.1" width="1.9" height="3.7" fill="#ff0000"/><rect x="438.4" y="200.2" width="1.9" height="2.9" fill="#ff0000"/><rect x="440.6" y="200.8" width="1.9" height="6.1" fill="#1e82f0"/><rect x="442.8" y="198.4" width="1.9" height="9.7" fill="#ff0000"/><rect x="445.0" y="191.0" width="1.9" height="10.4" fill="#ff0000"/><rect x="447.2" y="186.3" width="1.9" height="7.4" fill="#ff0000"/><rect x="449.4" y="183.7" width="1.9" height="4.7" fill="#ff0000"/><rect x="451.6" y="184.8" width="1.9" height="8.1" fill="#1e82f0"/><rect x="453.8" y="190.1" width="1.9" height="6.0" fill="#1e82f0"/><rect x="456.0" y="193.4" width="1.9" height="3.5" fill="#1e82f0"/><rect x="458.2" y="194.3" width="1.9" height="4.3" fill="#ff0000"/><rect x="460.4" y="195.6" width="1.9" height="3.8" fill="#1e82f0"/><rect x="462.6" y="197.1" width="1.9" height="3.7" fill="#1e82f0"/><rect x="464.8" y="198.6" width="1.9" height="5.1" fill="#1e82f0"/><rect x="467.0" y="201.8" width="1.9" height="4.9" fill="#1e82f0"/><rect x="469.2" y="204.5" width="1.9" height="7.5" fill="#1e82f0"/><rect x="471.4" y="204.1" width="1.9" height="6.0" fill="#1e82f0"/><rect x="473.6" y="200.3" width="1.9" height="6.4" fill="#ff0000"/><rect x="475.8" y="196.6" width="1.9" height="5.6" fill="#ff0000"/><rect x="478.0" y="192.3" width="1.9" height="6.7" fill="#ff0000"/><rect x="480.2" y="188.2" width="1.9" height="6.2" fill="#1e82f0"/><rect x="482.4" y="185.8" width="1.9" height="5.4" fill="#1e82f0"/><rect x="484.6" y="183.7" width="1.9" height="5.0" fill="#ff0000"/><rect x="486.8" y="182.0" width="1.9" height="5.1" fill="#ff0000"/><rect x="489.0" y="179.5" width="1.9" height="5.4" fill="#ff0000"/><rect x="491.2" y="176.0" width="1.9" height="5.7" fill="#ff0000"/><rect x="493.4" y="172.6" width="1.9" height="5.9" fill="#1e82f0"/><rect x="495.6" y="172.2" width="1.9" height="6.8" fill="#ff0000"/><rect x="497.8" y="176.8" width="1.9" height="23.0" fill="#1e82f0"/><rect x="500.0" y="191.3" width="1.9" height="8.6" fill="#ff0000"/><rect x="502.2" y="185.6" width="1.9" height="8.2" fill="#ff0000"/><rect x="504.4" y="184.3" width="1.9" height="3.7" fill="#1e82f0"/><rect x="506.6" y="182.8" width="1.9" height="3.6" fill="#ff0000"/><rect x="508.8" y="181.4" width="1.9" height="3.6" fill="#1e82f0"/><rect x="511.0" y="182.9" width="1.9" height="6.9" fill="#1e82f0"/><rect x="513.2" y="188.2" width="1.9" height="6.6" fill="#1e82f0"/><rect x="515.4" y="192.1" width="1.9" height="6.3" fill="#1e82f0"/><rect x="517.6" y="195.6" width="1.9" height="8.0" fill="#ff0000"/><rect x="519.8" y="190.5" width="1.9" height="7.9" fill="#ff0000"/><rect x="522.0" y="186.1" width="1.9" height="7.3" fill="#ff0000"/><rect x="524.2" y="183.1" width="1.9" height="5.0" fill="#ff0000"/><rect x="526.4" y="180.0" width="1.9" height="5.9" fill="#ff0000"/><rect x="528.6" y="179.0" width="1.9" height="4.2" fill="#ff0000"/><rect x="530.8" y="178.5" width="1.9" height="3.2" fill="#1e82f0"/><rect x="533.0" y="178.4" width="1.9" height="3.8" fill="#ff0000"/><rect x="535.2" y="179.7" width="1.9" height="4.1" fill="#1e82f0"/><rect x="537.4" y="180.7" width="1.9" height="4.4" fill="#ff0000"/><rect x="539.6" y="183.2" width="1.9" height="4.3" fill="#1e82f0"/><rect x="541.8" y="183.2" width="1.9" height="3.2" fill="#1e82f0"/><rect x="544.0" y="182.3" width="1.9" height="3.3" fill="#1e82f0"/><rect x="546.2" y="183.3" width="1.9" height="4.1" fill="#ff0000"/><rect x="548.4" y="185.1" width="1.9" height="3.6" fill="#1e82f0"/><rect x="550.6" y="186.6" width="1.9" height="4.1" fill="#ff0000"/><rect x="552.8" y="188.3" width="1.9" height="3.5" fill="#1e82f0"/><rect x="555.0" y="180.0" width="1.9" height="12.2" fill="#1e82f0"/><rect x="557.2" y="175.4" width="1.9" height="7.3" fill="#ff0000"/><rect x="559.4" y="172.0" width="1.9" height="5.8" fill="#1e82f0"/><rect x="561.6" y="172.9" width="1.9" height="5.4" fill="#1e82f0"/><rect x="563.8" y="175.9" width="1.9" height="6.4" fill="#1e82f0"/><rect x="566.0" y="179.2" width="1.9" height="4.8" fill="#1e82f0"/><rect x="568.2" y="181.5" width="1.9" height="3.6" fill="#1e82f0"/><rect x="570.4" y="183.6" width="1.9" height="4.1" fill="#1e82f0"/><rect x="572.6" y="183.3" width="1.9" height="3.6" fill="#ff0000"/><rect x="574.8" y="182.1" width="1.9" height="4.1" fill="#ff0000"/><rect x="577.0" y="180.8" width="1.9" height="3.8" fill="#ff0000"/><rect x="579.2" y="179.4" width="1.9" height="3.9" fill="#ff0000"/><rect x="581.4" y="179.1" width="1.9" height="2.4" fill="#ff0000"/><rect x="583.6" y="178.2" width="1.9" height="2.7" fill="#1e82f0"/><rect x="585.8" y="178.8" width="1.9" height="2.8" fill="#1e82f0"/><rect x="588.0" y="178.3" width="1.9" height="5.6" fill="#1e82f0"/><rect x="590.2" y="180.3" width="1.9" height="6.0" fill="#1e82f0"/><rect x="592.4" y="184.2" width="1.9" height="5.5" fill="#1e82f0"/><rect x="594.6" y="187.5" width="1.9" height="8.0" fill="#1e82f0"/><rect x="596.8" y="187.4" width="1.9" height="5.1" fill="#ff0000"/><rect x="599.0" y="183.2" width="1.9" height="5.7" fill="#ff0000"/><rect x="601.2" y="183.1" width="1.9" height="3.7" fill="#ffff80"/><rect x="603.4" y="183.3" width="1.9" height="3.9" fill="#ff0000"/><rect x="605.6" y="184.5" width="1.9" height="1.8" fill="#1e82f0"/><rect x="607.8" y="184.2" width="1.9" height="3.4" fill="#1e82f0"/><rect x="610.0" y="185.1" width="1.9" height="3.2" fill="#1e82f0"/><rect x="612.2" y="186.2" width="1.9" height="4.5" fill="#1e82f0"/><rect x="614.4" y="188.8" width="1.9" height="4.8" fill="#1e82f0"/><rect x="616.6" y="191.1" width="1.9" height="4.7" fill="#1e82f0"/><rect x="618.8" y="194.0" width="1.9" height="3.6" fill="#1e82f0"/><rect x="621.0" y="194.7" width="1.9" height="2.8" fill="#ff0000"/><rect x="623.2" y="194.2" width="1.9" height="2.9" fill="#1e82f0"/><rect x="625.4" y="193.5" width="1.9" height="2.9" fill="#1e82f0"/><rect x="627.6" y="193.1" width="1.9" height="2.9" fill="#1e82f0"/><rect x="629.8" y="191.0" width="1.9" height="4.4" fill="#ff0000"/><rect x="632.0" y="190.4" width="1.9" height="3.9" fill="#ff0000"/><rect x="634.2" y="188.6" width="1.9" height="4.1" fill="#ff0000"/><rect x="636.4" y="187.9" width="1.9" height="3.1" fill="#1e82f0"/><rect x="638.6" y="188.4" width="1.9" height="4.7" fill="#1e82f0"/><rect x="640.8" y="190.2" width="1.9" height="10.2" fill="#1e82f0"/><rect x="643.0" y="190.9" width="1.9" height="12.4" fill="#ff0000"/><rect x="645.2" y="180.9" width="1.9" height="13.1" fill="#ff0000"/><rect x="647.4" y="173.8" width="1.9" height="10.3" fill="#ff0000"/><rect x="649.6" y="171.5" width="1.9" height="4.8" fill="#ff0000"/><rect x="651.8" y="169.8" width="1.9" height="3.6" fill="#ff0000"/><rect x="654.0" y="170.5" width="1.9" height="5.7" fill="#1e82f0"/><rect x="656.2" y="172.2" width="1.9" height="6.5" fill="#ff0000"/><rect x="658.4" y="166.5" width="1.9" height="8.1" fill="#ff0000"/><rect x="660.6" y="168.6" width="1.9" height="5.1" fill="#ff0000"/><rect x="662.8" y="171.1" width="1.9" height="6.5" fill="#1e82f0"/><rect x="665.0" y="175.2" width="1.9" height="5.6" fill="#1e82f0"/><rect x="667.2" y="178.2" width="1.9" height="8.1" fill="#1e82f0"/><rect x="669.4" y="183.3" width="1.9" height="8.8" fill="#1e82f0"/><rect x="671.6" y="184.7" width="1.9" height="8.6" fill="#ff0000"/><rect x="673.8" y="177.8" width="1.9" height="9.7" fill="#ff0000"/><rect x="676.0" y="173.4" width="1.9" height="8.2" fill="#1e82f0"/><rect x="678.2" y="178.8" width="1.9" height="12.7" fill="#1e82f0"/><rect x="680.4" y="188.6" width="1.9" height="3.9" fill="#ff0000"/><rect x="682.6" y="190.4" width="1.9" height="4.0" fill="#1e82f0"/><rect x="684.8" y="191.4" width="1.9" height="4.2" fill="#1e82f0"/><rect x="687.0" y="186.0" width="1.9" height="17.1" fill="#ff0000"/><rect x="689.2" y="178.8" width="1.9" height="10.1" fill="#1e82f0"/><rect x="691.4" y="174.1" width="1.9" height="6.9" fill="#ff0000"/><rect x="693.6" y="164.2" width="1.9" height="12.2" fill="#ff0000"/><rect x="695.8" y="157.3" width="1.9" height="9.7" fill="#ff0000"/><rect x="698.0" y="159.1" width="1.9" height="7.5" fill="#ff0000"/><rect x="700.2" y="163.8" width="1.9" height="6.1" fill="#1e82f0"/><rect x="702.4" y="162.6" width="1.9" height="8.0" fill="#ff0000"/><rect x="704.6" y="155.3" width="1.9" height="10.2" fill="#1e82f0"/><rect x="706.8" y="145.3" width="1.9" height="13.0" fill="#ff0000"/><rect x="709.0" y="135.0" width="1.9" height="12.3" fill="#ffff80"/><rect x="711.2" y="125.6" width="1.9" height="11.6" fill="#ff0000"/><rect x="713.4" y="117.8" width="1.9" height="10.3" fill="#ff0000"/><rect x="715.6" y="110.5" width="1.9" height="10.4" fill="#ff0000"/><rect x="717.8" y="103.2" width="1.9" height="9.6" fill="#ffff80"/><rect x="720.0" y="106.3" width="1.9" height="14.0" fill="#ff0000"/><rect x="722.2" y="117.9" width="1.9" height="10.2" fill="#1e82f0"/><rect x="724.4" y="124.8" width="1.9" height="10.3" fill="#1e82f0"/><rect x="726.6" y="132.8" width="1.9" height="5.7" fill="#1e82f0"/><rect x="728.8" y="135.1" width="1.9" height="6.3" fill="#1e82f0"/><rect x="731.0" y="138.7" width="1.9" height="5.7" fill="#ff0000"/><rect x="733.2" y="134.0" width="1.9" height="9.9" fill="#ff0000"/><rect x="735.4" y="128.5" width="1.9" height="10.5" fill="#ffff80"/><rect x="737.6" y="136.0" width="1.9" height="8.2" fill="#1e82f0"/><rect x="739.8" y="141.6" width="1.9" height="5.0" fill="#1e82f0"/><rect x="742.0" y="137.1" width="1.9" height="8.2" fill="#ff0000"/><rect x="744.2" y="129.9" width="1.9" height="9.2" fill="#ff0000"/><rect x="746.4" y="120.9" width="1.9" height="12.3" fill="#ff0000"/><rect x="748.6" y="118.5" width="1.9" height="5.3" fill="#ff0000"/><rect x="750.8" y="118.6" width="1.9" height="2.6" fill="#1e82f0"/><rect x="753.0" y="118.1" width="1.9" height="4.2" fill="#1e82f0"/><rect x="755.2" y="119.3" width="1.9" height="6.1" fill="#1e82f0"/><rect x="757.4" y="122.8" width="1.9" height="4.7" fill="#1e82f0"/><rect x="759.6" y="124.5" width="1.9" height="3.7" fill="#ff0000"/><rect x="761.8" y="125.4" width="1.9" height="2.2" fill="#ff0000"/><rect x="764.0" y="125.4" width="1.9" height="3.3" fill="#1e82f0"/><rect x="766.2" y="125.8" width="1.9" height="3.5" fill="#1e82f0"/><rect x="768.4" y="126.4" width="1.9" height="3.6" fill="#1e82f0"/><rect x="770.6" y="126.9" width="1.9" height="3.1" fill="#ff0000"/><rect x="772.8" y="127.3" width="1.9" height="3.9" fill="#1e82f0"/><rect x="775.0" y="126.0" width="1.9" height="4.8" fill="#ff0000"/><rect x="777.2" y="123.5" width="1.9" height="5.3" fill="#1e82f0"/><rect x="779.4" y="121.6" width="1.9" height="4.0" fill="#ff0000"/><rect x="781.6" y="121.3" width="1.9" height="4.6" fill="#1e82f0"/><rect x="783.8" y="123.3" width="1.9" height="5.8" fill="#ff0000"/><rect x="786.0" y="126.9" width="1.9" height="4.5" fill="#ffff80"/><rect x="788.2" y="129.1" width="1.9" height="5.2" fill="#ff0000"/><rect x="790.4" y="132.6" width="1.9" height="7.3" fill="#1e82f0"/><rect x="792.6" y="138.2" width="1.9" height="9.8" fill="#1e82f0"/><rect x="794.8" y="145.7" width="1.9" height="6.3" fill="#1e82f0"/><rect x="797.0" y="149.4" width="1.9" height="3.7" fill="#1e82f0"/>
<rect x="801.3" y="181.2" width="1.9" height="9.6" fill="#ff0000"/><rect x="803.5" y="178.2" width="1.9" height="7.5" fill="#ff0000"/><rect x="805.7" y="174.6" width="1.9" height="6.6" fill="#ff0000"/><rect x="807.9" y="175.8" width="1.9" height="12.4" fill="#1e82f0"/><rect x="810.1" y="185.9" width="1.9" height="7.6" fill="#1e82f0"/><rect x="812.3" y="187.5" width="1.9" height="4.0" fill="#ff0000"/><rect x="814.5" y="185.8" width="1.9" height="4.2" fill="#ff0000"/><rect x="816.7" y="186.4" width="1.9" height="4.8" fill="#1e82f0"/><rect x="818.9" y="188.6" width="1.9" height="5.7" fill="#1e82f0"/><rect x="821.1" y="191.5" width="1.9" height="4.7" fill="#1e82f0"/><rect x="823.3" y="194.2" width="1.9" height="4.3" fill="#1e82f0"/><rect x="825.5" y="187.1" width="1.9" height="9.0" fill="#ff0000"/><rect x="827.7" y="180.1" width="1.9" height="9.5" fill="#ff0000"/><rect x="829.9" y="181.0" width="1.9" height="6.9" fill="#1e82f0"/><rect x="832.1" y="184.8" width="1.9" height="7.2" fill="#1e82f0"/><rect x="834.3" y="189.1" width="1.9" height="6.5" fill="#1e82f0"/><rect x="836.5" y="191.6" width="1.9" height="3.9" fill="#ff0000"/><rect x="838.7" y="189.8" width="1.9" height="4.2" fill="#ff0000"/><rect x="840.9" y="188.0" width="1.9" height="4.2" fill="#ff0000"/><rect x="843.1" y="188.4" width="1.9" height="5.2" fill="#1e82f0"/><rect x="845.3" y="191.4" width="1.9" height="7.5" fill="#1e82f0"/><rect x="847.5" y="195.9" width="1.9" height="6.4" fill="#1e82f0"/><rect x="849.7" y="200.3" width="1.9" height="5.2" fill="#ff0000"/><rect x="851.9" y="194.4" width="1.9" height="9.2" fill="#ff0000"/><rect x="854.1" y="189.6" width="1.9" height="6.7" fill="#ff0000"/><rect x="856.3" y="190.0" width="1.9" height="2.8" fill="#1e82f0"/><rect x="858.5" y="189.6" width="1.9" height="3.3" fill="#1e82f0"/><rect x="860.7" y="190.3" width="1.9" height="3.6" fill="#1e82f0"/><rect x="862.9" y="191.3" width="1.9" height="5.4" fill="#1e82f0"/><rect x="865.1" y="193.7" width="1.9" height="6.2" fill="#1e82f0"/><rect x="867.3" y="197.1" width="1.9" height="6.9" fill="#ff0000"/><rect x="869.5" y="198.5" width="1.9" height="7.2" fill="#1e82f0"/><rect x="871.7" y="188.9" width="1.9" height="13.0" fill="#ff0000"/><rect x="873.9" y="185.1" width="1.9" height="6.2" fill="#ff0000"/><rect x="876.1" y="183.2" width="1.9" height="4.4" fill="#1e82f0"/><rect x="878.3" y="185.0" width="1.9" height="5.2" fill="#ff0000"/><rect x="880.5" y="187.6" width="1.9" height="4.9" fill="#1e82f0"/><rect x="882.7" y="189.5" width="1.9" height="3.8" fill="#1e82f0"/><rect x="884.9" y="191.2" width="1.9" height="4.1" fill="#1e82f0"/><rect x="887.1" y="187.9" width="1.9" height="7.5" fill="#ff0000"/><rect x="889.3" y="183.7" width="1.9" height="6.8" fill="#ff0000"/><rect x="891.5" y="180.2" width="1.9" height="6.1" fill="#ff0000"/><rect x="893.7" y="178.5" width="1.9" height="6.8" fill="#1e82f0"/><rect x="895.9" y="181.8" width="1.9" height="11.1" fill="#1e82f0"/><rect x="898.1" y="187.6" width="1.9" height="6.5" fill="#ff0000"/><rect x="900.3" y="180.9" width="1.9" height="8.6" fill="#ff0000"/><rect x="902.5" y="174.5" width="1.9" height="9.3" fill="#1e82f0"/><rect x="904.7" y="170.1" width="1.9" height="6.8" fill="#ffff80"/><rect x="906.9" y="167.7" width="1.9" height="4.4" fill="#ff0000"/><rect x="909.1" y="165.5" width="1.9" height="4.4" fill="#ff0000"/><rect x="911.3" y="163.7" width="1.9" height="4.0" fill="#ff0000"/><rect x="913.5" y="161.0" width="1.9" height="4.5" fill="#ff0000"/><rect x="915.7" y="157.8" width="1.9" height="5.3" fill="#ff0000"/><rect x="917.9" y="156.9" width="1.9" height="3.6" fill="#1e82f0"/><rect x="920.1" y="158.0" width="1.9" height="5.1" fill="#ff0000"/><rect x="922.3" y="159.4" width="1.9" height="4.5" fill="#ff0000"/><rect x="924.5" y="156.6" width="1.9" height="5.0" fill="#ff0000"/><rect x="926.7" y="155.9" width="1.9" height="3.5" fill="#ff0000"/><rect x="928.9" y="156.6" width="1.9" height="4.4" fill="#1e82f0"/><rect x="931.1" y="155.6" width="1.9" height="5.7" fill="#ff0000"/><rect x="933.3" y="150.4" width="1.9" height="7.6" fill="#ff0000"/><rect x="935.5" y="146.1" width="1.9" height="6.6" fill="#1e82f0"/><rect x="937.7" y="142.8" width="1.9" height="5.9" fill="#ff0000"/><rect x="939.9" y="140.4" width="1.9" height="5.5" fill="#ff0000"/><rect x="942.1" y="140.6" width="1.9" height="10.7" fill="#ff0000"/><rect x="944.3" y="148.3" width="1.9" height="7.8" fill="#ff0000"/><rect x="946.5" y="152.4" width="1.9" height="3.4" fill="#1e82f0"/><rect x="948.7" y="150.7" width="1.9" height="3.5" fill="#1e82f0"/><rect x="950.9" y="151.7" width="1.9" height="9.1" fill="#1e82f0"/><rect x="953.1" y="157.8" width="1.9" height="10.2" fill="#1e82f0"/><rect x="955.3" y="165.1" width="1.9" height="9.0" fill="#1e82f0"/><rect x="957.5" y="170.4" width="1.9" height="10.1" fill="#1e82f0"/><rect x="959.7" y="178.8" width="1.9" height="21.8" fill="#1e82f0"/><rect x="961.9" y="189.8" width="1.9" height="10.9" fill="#1e82f0"/><rect x="964.1" y="182.6" width="1.9" height="9.5" fill="#ff0000"/><rect x="966.3" y="183.6" width="1.9" height="6.4" fill="#1e82f0"/><rect x="968.5" y="186.7" width="1.9" height="5.1" fill="#1e82f0"/><rect x="970.7" y="189.4" width="1.9" height="2.7" fill="#ff0000"/><rect x="972.9" y="189.0" width="1.9" height="2.5" fill="#1e82f0"/><rect x="975.1" y="188.2" width="1.9" height="3.6" fill="#ff0000"/><rect x="977.3" y="187.0" width="1.9" height="4.0" fill="#1e82f0"/><rect x="979.5" y="185.3" width="1.9" height="4.1" fill="#ff0000"/><rect x="981.7" y="183.2" width="1.9" height="4.9" fill="#ff0000"/><rect x="983.9" y="182.4" width="1.9" height="3.8" fill="#ff0000"/><rect x="986.1" y="182.5" width="1.9" height="3.6" fill="#1e82f0"/><rect x="988.3" y="183.9" width="1.9" height="3.9" fill="#ffff80"/><rect x="990.5" y="183.9" width="1.9" height="4.1" fill="#ff0000"/><rect x="992.7" y="181.0" width="1.9" height="5.7" fill="#ff0000"/><rect x="994.9" y="178.6" width="1.9" height="5.5" fill="#ff0000"/><rect x="997.1" y="177.0" width="1.9" height="4.3" fill="#ff0000"/><rect x="999.3" y="175.8" width="1.9" height="3.8" fill="#ff0000"/><rect x="1001.5" y="173.1" width="1.9" height="5.2" fill="#ff0000"/><rect x="1003.7" y="173.0" width="1.9" height="3.1" fill="#1e82f0"/><rect x="1005.9" y="172.8" width="1.9" height="2.7" fill="#1e82f0"/><rect x="1008.1" y="173.0" width="1.9" height="3.0" fill="#ff0000"/><rect x="1010.3" y="173.2" width="1.9" height="6.1" fill="#1e82f0"/><rect x="1012.5" y="177.0" width="1.9" height="5.9" fill="#1e82f0"/><rect x="1014.7" y="180.5" width="1.9" height="5.5" fill="#1e82f0"/><rect x="1016.9" y="182.8" width="1.9" height="3.3" fill="#ff0000"/><rect x="1019.1" y="183.8" width="1.9" height="2.3" fill="#1e82f0"/><rect x="1021.3" y="184.4" width="1.9" height="2.9" fill="#ff0000"/><rect x="1023.5" y="183.8" width="1.9" height="6.1" fill="#1e82f0"/><rect x="1025.7" y="187.4" width="1.9" height="11.8" fill="#1e82f0"/><rect x="1027.9" y="196.9" width="1.9" height="13.9" fill="#1e82f0"/><rect x="1030.1" y="204.9" width="1.9" height="5.7" fill="#ff0000"/><rect x="1032.3" y="202.6" width="1.9" height="5.4" fill="#1e82f0"/><rect x="1034.5" y="203.9" width="1.9" height="4.8" fill="#1e82f0"/><rect x="1036.7" y="206.0" width="1.9" height="4.6" fill="#1e82f0"/><rect x="1038.9" y="205.4" width="1.9" height="5.6" fill="#ff0000"/><rect x="1041.1" y="202.5" width="1.9" height="5.6" fill="#ff0000"/><rect x="1043.3" y="199.9" width="1.9" height="6.1" fill="#ff0000"/><rect x="1045.5" y="199.7" width="1.9" height="3.3" fill="#ff0000"/><rect x="1047.7" y="200.5" width="1.9" height="3.5" fill="#1e82f0"/><rect x="1049.9" y="201.0" width="1.9" height="3.3" fill="#1e82f0"/><rect x="1052.1" y="202.1" width="1.9" height="3.4" fill="#1e82f0"/><rect x="1054.3" y="203.2" width="1.9" height="3.7" fill="#1e82f0"/><rect x="1056.5" y="204.5" width="1.9" height="4.1" fill="#1e82f0"/><rect x="1058.7" y="206.4" width="1.9" height="3.0" fill="#ff0000"/><rect x="1060.9" y="207.4" width="1.9" height="3.4" fill="#1e82f0"/><rect x="1063.1" y="203.1" width="1.9" height="6.0" fill="#ffff80"/><rect x="1065.3" y="200.1" width="1.9" height="6.2" fill="#ff0000"/><rect x="1067.5" y="198.6" width="1.9" height="4.4" fill="#1e82f0"/><rect x="1069.7" y="199.8" width="1.9" height="5.7" fill="#1e82f0"/><rect x="1071.9" y="202.5" width="1.9" height="5.6" fill="#1e82f0"/><rect x="1074.1" y="204.2" width="1.9" height="4.3" fill="#ff0000"/><rect x="1076.3" y="204.2" width="1.9" height="3.2" fill="#ff0000"/><rect x="1078.5" y="203.5" width="1.9" height="2.9" fill="#ff0000"/><rect x="1080.7" y="202.6" width="1.9" height="4.3" fill="#1e82f0"/><rect x="1082.9" y="204.5" width="1.9" height="3.5" fill="#1e82f0"/><rect x="1085.1" y="206.3" width="1.9" height="3.6" fill="#1e82f0"/><rect x="1087.3" y="207.8" width="1.9" height="4.0" fill="#1e82f0"/><rect x="1089.5" y="209.0" width="1.9" height="3.5" fill="#1e82f0"/><rect x="1091.7" y="210.6" width="1.9" height="3.9" fill="#1e82f0"/><rect x="1093.9" y="212.1" width="1.9" height="3.7" fill="#1e82f0"/><rect x="1096.1" y="213.5" width="1.9" height="6.4" fill="#1e82f0"/><rect x="1098.3" y="216.5" width="1.9" height="6.8" fill="#1e82f0"/><rect x="1100.5" y="220.4" width="1.9" height="6.2" fill="#1e82f0"/><rect x="1102.7" y="224.6" width="1.9" height="3.6" fill="#1e82f0"/><rect x="1104.9" y="224.2" width="1.9" height="3.4" fill="#ff0000"/><rect x="1107.1" y="223.3" width="1.9" height="3.6" fill="#ff0000"/><rect x="1109.3" y="223.4" width="1.9" height="3.7" fill="#ff0000"/><rect x="1111.5" y="224.6" width="1.9" height="5.6" fill="#1e82f0"/><rect x="1113.7" y="228.0" width="1.9" height="5.3" fill="#ff0000"/><rect x="1115.9" y="213.6" width="1.9" height="22.1" fill="#ff0000"/><rect x="1118.1" y="213.6" width="1.9" height="6.0" fill="#ff0000"/><rect x="1120.3" y="217.3" width="1.9" height="5.9" fill="#1e82f0"/><rect x="1122.5" y="217.0" width="1.9" height="6.5" fill="#ff0000"/><rect x="1124.7" y="213.4" width="1.9" height="6.4" fill="#ff0000"/><rect x="1126.9" y="212.7" width="1.9" height="6.7" fill="#1e82f0"/><rect x="1129.1" y="217.7" width="1.9" height="4.2" fill="#1e82f0"/><rect x="1131.3" y="214.5" width="1.9" height="5.9" fill="#ff0000"/><rect x="1133.5" y="213.1" width="1.9" height="4.3" fill="#ffff80"/><rect x="1135.7" y="214.1" width="1.9" height="5.4" fill="#1e82f0"/><rect x="1137.9" y="217.7" width="1.9" height="4.1" fill="#1e82f0"/><rect x="1140.1" y="218.6" width="1.9" height="3.8" fill="#ffff80"/><rect x="1142.3" y="218.9" width="1.9" height="3.1" fill="#1e82f0"/><rect x="1144.5" y="218.9" width="1.9" height="3.0" fill="#ff0000"/><rect x="1146.7" y="215.1" width="1.9" height="6.2" fill="#ff0000"/><rect x="1148.9" y="212.0" width="1.9" height="6.1" fill="#ff0000"/><rect x="1151.1" y="209.5" width="1.9" height="4.9" fill="#ff0000"/><rect x="1153.3" y="208.2" width="1.9" height="3.5" fill="#ff0000"/><rect x="1155.5" y="207.4" width="1.9" height="2.6" fill="#ff0000"/><rect x="1157.7" y="208.0" width="1.9" height="4.2" fill="#1e82f0"/><rect x="1159.9" y="205.2" width="1.9" height="7.9" fill="#ff0000"/><rect x="1162.1" y="198.6" width="1.9" height="8.6" fill="#1e82f0"/><rect x="1164.3" y="198.7" width="1.9" height="3.1" fill="#ff0000"/><rect x="1166.5" y="199.3" width="1.9" height="2.7" fill="#1e82f0"/><rect x="1168.7" y="198.9" width="1.9" height="3.6" fill="#ffff80"/><rect x="1170.9" y="199.7" width="1.9" height="2.3" fill="#ffff80"/><rect x="1173.1" y="199.5" width="1.9" height="2.9" fill="#ff0000"/><rect x="1175.3" y="199.0" width="1.9" height="2.7" fill="#ff0000"/><rect x="1177.5" y="198.9" width="1.9" height="1.9" fill="#1e82f0"/><rect x="1179.7" y="198.9" width="1.9" height="2.4" fill="#1e82f0"/><rect x="1181.9" y="198.9" width="1.9" height="2.1" fill="#ff0000"/><rect x="1184.1" y="194.7" width="1.9" height="5.7" fill="#ff0000"/><rect x="1186.3" y="190.4" width="1.9" height="7.2" fill="#ff0000"/><rect x="1188.5" y="190.6" width="1.9" height="3.2" fill="#ff0000"/><rect x="1190.7" y="188.9" width="1.9" height="4.1" fill="#ff0000"/><rect x="1192.9" y="187.2" width="1.9" height="4.8" fill="#ff0000"/><rect x="1195.1" y="184.8" width="1.9" height="5.2" fill="#ff0000"/><rect x="1197.3" y="181.7" width="1.9" height="4.9" fill="#ff0000"/><rect x="1199.5" y="177.9" width="1.9" height="6.6" fill="#ff0000"/><rect x="1201.7" y="175.9" width="1.9" height="4.6" fill="#1e82f0"/><rect x="1203.9" y="174.3" width="1.9" height="3.8" fill="#1e82f0"/><rect x="1206.1" y="172.5" width="1.9" height="3.6" fill="#1e82f0"/><rect x="1208.3" y="172.2" width="1.9" height="6.2" fill="#1e82f0"/><rect x="1210.5" y="175.4" width="1.9" height="5.3" fill="#1e82f0"/><rect x="1212.7" y="177.4" width="1.9" height="4.2" fill="#ff0000"/><rect x="1214.9" y="177.0" width="1.9" height="3.5" fill="#ff0000"/><rect x="1217.1" y="176.2" width="1.9" height="3.3" fill="#ff0000"/><rect x="1219.3" y="173.3" width="1.9" height="5.9" fill="#ff0000"/><rect x="1221.5" y="172.2" width="1.9" height="4.4" fill="#ff0000"/><rect x="1223.7" y="172.9" width="1.9" height="6.4" fill="#1e82f0"/><rect x="1225.9" y="176.3" width="1.9" height="5.7" fill="#1e82f0"/><rect x="1228.1" y="180.5" width="1.9" height="4.5" fill="#1e82f0"/><rect x="1230.3" y="182.2" width="1.9" height="4.9" fill="#ff0000"/><rect x="1232.5" y="183.9" width="1.9" height="7.4" fill="#1e82f0"/><rect x="1234.7" y="189.2" width="1.9" height="2.9" fill="#1e82f0"/><rect x="1236.9" y="189.8" width="1.9" height="3.1" fill="#1e82f0"/><rect x="1239.1" y="190.7" width="1.9" height="2.7" fill="#1e82f0"/><rect x="1241.3" y="190.8" width="1.9" height="4.5" fill="#ff0000"/><rect x="1243.5" y="192.2" width="1.9" height="4.0" fill="#1e82f0"/><rect x="1245.7" y="193.5" width="1.9" height="5.2" fill="#ff0000"/><rect x="1247.9" y="196.6" width="1.9" height="3.9" fill="#ff0000"/><rect x="1250.1" y="194.0" width="1.9" height="6.7" fill="#ff0000"/><rect x="1252.3" y="189.6" width="1.9" height="7.2" fill="#ff0000"/><rect x="1254.5" y="190.6" width="1.9" height="4.7" fill="#1e82f0"/><rect x="1256.7" y="192.0" width="1.9" height="4.7" fill="#1e82f0"/><rect x="1258.9" y="194.3" width="1.9" height="6.1" fill="#ff0000"/><rect x="1261.1" y="198.0" width="1.9" height="8.4" fill="#1e82f0"/><rect x="1263.3" y="204.6" width="1.9" height="4.6" fill="#1e82f0"/><rect x="1265.5" y="207.3" width="1.9" height="2.6" fill="#1e82f0"/><rect x="1267.7" y="208.0" width="1.9" height="3.7" fill="#ff0000"/><rect x="1269.9" y="208.8" width="1.9" height="3.6" fill="#1e82f0"/><rect x="1272.1" y="208.0" width="1.9" height="3.5" fill="#ff0000"/><rect x="1274.3" y="205.5" width="1.9" height="3.9" fill="#ff0000"/><rect x="1276.5" y="206.3" width="1.9" height="5.2" fill="#1e82f0"/><rect x="1278.7" y="208.4" width="1.9" height="5.9" fill="#1e82f0"/><rect x="1280.9" y="211.1" width="1.9" height="6.2" fill="#1e82f0"/><rect x="1283.1" y="214.7" width="1.9" height="5.7" fill="#1e82f0"/><rect x="1285.3" y="217.6" width="1.9" height="5.6" fill="#ffff80"/><rect x="1287.5" y="216.5" width="1.9" height="6.3" fill="#ff0000"/><rect x="1289.7" y="213.8" width="1.9" height="5.9" fill="#ff0000"/><rect x="1291.9" y="209.7" width="1.9" height="7.0" fill="#ff0000"/><rect x="1294.1" y="206.5" width="1.9" height="6.7" fill="#ff0000"/><rect x="1296.3" y="204.5" width="1.9" height="5.4" fill="#ff0000"/><rect x="1298.5" y="201.8" width="1.9" height="5.4" fill="#ff0000"/><rect x="1300.7" y="193.1" width="1.9" height="11.1" fill="#1e82f0"/><rect x="1302.9" y="183.7" width="1.9" height="12.4" fill="#ff0000"/><rect x="1305.1" y="184.4" width="1.9" height="8.8" fill="#ff0000"/><rect x="1307.3" y="190.8" width="1.9" height="10.3" fill="#1e82f0"/><rect x="1309.5" y="199.1" width="1.9" height="11.4" fill="#1e82f0"/><rect x="1311.7" y="207.7" width="1.9" height="17.5" fill="#1e82f0"/><rect x="1313.9" y="223.2" width="1.9" height="16.1" fill="#1e82f0"/><rect x="1316.1" y="236.7" width="1.9" height="11.5" fill="#1e82f0"/><rect x="1318.3" y="245.4" width="1.9" height="6.5" fill="#ffff80"/><rect x="1320.5" y="241.7" width="1.9" height="11.7" fill="#ff0000"/><rect x="1322.7" y="230.6" width="1.9" height="13.9" fill="#ff0000"/><rect x="1324.9" y="230.4" width="1.9" height="6.2" fill="#1e82f0"/><rect x="1327.1" y="234.0" width="1.9" height="4.2" fill="#1e82f0"/><rect x="1329.3" y="235.9" width="1.9" height="4.4" fill="#1e82f0"/><rect x="1331.5" y="237.0" width="1.9" height="4.6" fill="#1e82f0"/><rect x="1333.7" y="239.2" width="1.9" height="9.2" fill="#1e82f0"/><rect x="1335.9" y="246.2" width="1.9" height="6.7" fill="#ff0000"/><rect x="1338.1" y="242.6" width="1.9" height="8.9" fill="#ff0000"/><rect x="1340.3" y="237.5" width="1.9" height="7.3" fill="#1e82f0"/><rect x="1342.5" y="233.4" width="1.9" height="6.8" fill="#ff0000"/><rect x="1344.7" y="228.5" width="1.9" height="7.2" fill="#ff0000"/><rect x="1346.9" y="226.4" width="1.9" height="5.0" fill="#ff0000"/><rect x="1349.1" y="223.6" width="1.9" height="5.7" fill="#ff0000"/><rect x="1351.3" y="222.7" width="1.9" height="11.5" fill="#ffff80"/><rect x="1353.5" y="231.8" width="1.9" height="11.0" fill="#1e82f0"/><rect x="1355.7" y="239.6" width="1.9" height="8.1" fill="#ffff80"/><rect x="1357.9" y="242.6" width="1.9" height="5.0" fill="#ff0000"/><rect x="1360.1" y="240.8" width="1.9" height="10.8" fill="#1e82f0"/><rect x="1362.3" y="249.8" width="1.9" height="14.4" fill="#1e82f0"/><rect x="1364.5" y="262.2" width="1.9" height="6.1" fill="#ff0000"/><rect x="1366.7" y="252.7" width="1.9" height="12.4" fill="#1e82f0"/><rect x="1368.9" y="246.8" width="1.9" height="8.7" fill="#ff0000"/><rect x="1371.1" y="242.8" width="1.9" height="5.9" fill="#ff0000"/><rect x="1373.3" y="240.9" width="1.9" height="4.3" fill="#ff0000"/><rect x="1375.5" y="241.7" width="1.9" height="4.8" fill="#1e82f0"/><rect x="1377.7" y="243.8" width="1.9" height="4.4" fill="#1e82f0"/><rect x="1379.9" y="238.2" width="1.9" height="10.0" fill="#ff0000"/><rect x="1382.1" y="233.2" width="1.9" height="7.7" fill="#ff0000"/><rect x="1384.3" y="233.4" width="1.9" height="3.2" fill="#1e82f0"/><rect x="1386.5" y="233.4" width="1.9" height="3.4" fill="#1e82f0"/><rect x="1388.7" y="228.1" width="1.9" height="8.8" fill="#ff0000"/><rect x="1390.9" y="222.1" width="1.9" height="8.8" fill="#ffff80"/><rect x="1393.1" y="219.0" width="1.9" height="5.6" fill="#ff0000"/><rect x="1395.3" y="216.4" width="1.9" height="4.5" fill="#ff0000"/><rect x="1397.5" y="212.7" width="1.9" height="5.2" fill="#ff0000"/><rect x="1399.7" y="211.7" width="1.9" height="4.3" fill="#ff0000"/><rect x="1401.9" y="209.5" width="1.9" height="4.8" fill="#ff0000"/><rect x="1404.1" y="205.9" width="1.9" height="5.2" fill="#ff0000"/><rect x="1406.3" y="199.7" width="1.9" height="9.1" fill="#1e82f0"/><rect x="1408.5" y="190.4" width="1.9" height="12.0" fill="#ff0000"/><rect x="1410.7" y="178.9" width="1.9" height="14.4" fill="#ff0000"/><rect x="1412.9" y="175.2" width="1.9" height="6.2" fill="#ff0000"/><rect x="1415.1" y="173.8" width="1.9" height="12.3" fill="#1e82f0"/><rect x="1417.3" y="184.0" width="1.9" height="10.6" fill="#1e82f0"/><rect x="1419.5" y="191.8" width="1.9" height="3.6" fill="#1e82f0"/><rect x="1421.7" y="193.2" width="1.9" height="3.7" fill="#1e82f0"/><rect x="1423.9" y="194.2" width="1.9" height="9.5" fill="#1e82f0"/><rect x="1426.1" y="200.9" width="1.9" height="9.8" fill="#1e82f0"/><rect x="1428.3" y="208.0" width="1.9" height="5.5" fill="#1e82f0"/><rect x="1430.5" y="211.4" width="1.9" height="4.3" fill="#1e82f0"/><rect x="1432.7" y="207.2" width="1.9" height="7.6" fill="#ff0000"/><rect x="1434.9" y="206.2" width="1.9" height="4.7" fill="#1e82f0"/><rect x="1437.1" y="208.3" width="1.9" height="6.0" fill="#1e82f0"/><rect x="1439.3" y="211.5" width="1.9" height="6.3" fill="#1e82f0"/><rect x="1441.5" y="214.7" width="1.9" height="6.6" fill="#1e82f0"/><rect x="1443.7" y="219.0" width="1.9" height="5.3" fill="#1e82f0"/><rect x="1445.9" y="222.2" width="1.9" height="6.5" fill="#1e82f0"/><rect x="1448.1" y="225.7" width="1.9" height="7.1" fill="#1e82f0"/><rect x="1450.3" y="230.6" width="1.9" height="6.3" fill="#1e82f0"/><rect x="1452.5" y="234.9" width="1.9" height="5.5" fill="#1e82f0"/><rect x="1454.7" y="231.5" width="1.9" height="8.1" fill="#ff0000"/><rect x="1456.9" y="225.7" width="1.9" height="8.3" fill="#ff0000"/><rect x="1459.1" y="225.6" width="1.9" height="3.2" fill="#ff0000"/><rect x="1461.3" y="224.8" width="1.9" height="2.8" fill="#ff0000"/><rect x="1463.5" y="224.9" width="1.9" height="4.4" fill="#1e82f0"/><rect x="1465.7" y="226.9" width="1.9" height="5.2" fill="#1e82f0"/><rect x="1467.9" y="229.5" width="1.9" height="6.3" fill="#1e82f0"/><rect x="1470.1" y="229.2" width="1.9" height="6.4" fill="#ff0000"/><rect x="1472.3" y="223.9" width="1.9" height="7.8" fill="#ff0000"/><rect x="1474.5" y="215.7" width="1.9" height="10.9" fill="#ff0000"/><rect x="1476.7" y="210.2" width="1.9" height="8.1" fill="#ff0000"/>
<rect x="1474.1" y="217.3" width="1.9" height="11.2" fill="#ff0000"/><rect x="1476.4" y="210.2" width="1.9" height="9.2" fill="#ffff80"/><rect x="1478.7" y="210.0" width="1.9" height="3.0" fill="#ff0000"/><rect x="1481.0" y="209.3" width="1.9" height="3.1" fill="#ff0000"/><rect x="1483.3" y="209.8" width="1.9" height="3.4" fill="#1e82f0"/><rect x="1485.6" y="211.2" width="1.9" height="3.4" fill="#1e82f0"/><rect x="1487.9" y="212.5" width="1.9" height="3.5" fill="#ffff80"/><rect x="1490.2" y="214.3" width="1.9" height="3.3" fill="#1e82f0"/><rect x="1494.8" y="218.1" width="1.9" height="5.3" fill="#ffff80"/><rect x="1497.1" y="221.2" width="1.9" height="4.6" fill="#1e82f0"/><rect x="1499.4" y="222.7" width="1.9" height="2.7" fill="#1e82f0"/><rect x="1501.7" y="221.6" width="1.9" height="2.7" fill="#ff0000"/><rect x="1504.0" y="220.6" width="1.9" height="3.2" fill="#1e82f0"/><rect x="1506.3" y="219.6" width="1.9" height="3.7" fill="#ff0000"/><rect x="1508.6" y="219.8" width="1.9" height="2.6" fill="#ff0000"/><rect x="1510.9" y="218.5" width="1.9" height="2.9" fill="#ff0000"/><rect x="1513.2" y="217.1" width="1.9" height="3.4" fill="#ff0000"/><rect x="1515.5" y="215.2" width="1.9" height="4.1" fill="#ff0000"/><rect x="1517.8" y="213.2" width="1.9" height="4.7" fill="#ff0000"/><rect x="1520.1" y="213.6" width="1.9" height="4.5" fill="#ffff80"/><rect x="1522.4" y="215.2" width="1.9" height="3.8" fill="#ff0000"/><rect x="1524.7" y="217.4" width="1.9" height="3.9" fill="#1e82f0"/><rect x="1527.0" y="212.4" width="1.9" height="7.1" fill="#ff0000"/><rect x="1529.3" y="207.5" width="1.9" height="6.9" fill="#ff0000"/><rect x="1531.6" y="204.3" width="1.9" height="6.2" fill="#ff0000"/><rect x="1533.9" y="200.6" width="1.9" height="6.0" fill="#ff0000"/><rect x="1538.5" y="199.9" width="1.9" height="4.1" fill="#1e82f0"/><rect x="1540.8" y="201.5" width="1.9" height="4.1" fill="#1e82f0"/><rect x="1543.1" y="202.8" width="1.9" height="5.1" fill="#1e82f0"/><rect x="1545.4" y="206.4" width="1.9" height="4.7" fill="#1e82f0"/><rect x="1547.7" y="209.4" width="1.9" height="4.9" fill="#1e82f0"/><rect x="1550.0" y="212.4" width="1.9" height="3.7" fill="#1e82f0"/><rect x="1552.3" y="212.4" width="1.9" height="3.2" fill="#ffff80"/><rect x="1554.6" y="212.2" width="1.9" height="3.0" fill="#1e82f0"/><rect x="1556.9" y="211.5" width="1.9" height="3.7" fill="#ff0000"/><rect x="1559.2" y="209.6" width="1.9" height="4.0" fill="#ff0000"/><rect x="1561.5" y="206.5" width="1.9" height="4.6" fill="#ff0000"/><rect x="1563.8" y="203.1" width="1.9" height="6.3" fill="#ffff80"/><rect x="1566.1" y="199.6" width="1.9" height="6.0" fill="#ff0000"/><rect x="1568.4" y="197.5" width="1.9" height="3.9" fill="#1e82f0"/><rect x="1570.7" y="198.0" width="1.9" height="5.1" fill="#ff0000"/><rect x="1573.0" y="201.1" width="1.9" height="4.4" fill="#1e82f0"/><rect x="1575.3" y="203.1" width="1.9" height="5.3" fill="#1e82f0"/><rect x="1577.6" y="206.0" width="1.9" height="5.2" fill="#1e82f0"/><rect x="1579.9" y="204.3" width="1.9" height="6.5" fill="#ff0000"/><rect x="1582.2" y="200.1" width="1.9" height="6.0" fill="#ff0000"/><rect x="1584.5" y="197.5" width="1.9" height="4.2" fill="#ff0000"/><rect x="1586.8" y="199.2" width="1.9" height="6.1" fill="#1e82f0"/><rect x="1591.4" y="206.3" width="1.9" height="3.6" fill="#1e82f0"/><rect x="1593.7" y="206.2" width="1.9" height="2.7" fill="#ffff80"/><rect x="1598.3" y="206.0" width="1.9" height="2.3" fill="#1e82f0"/><rect x="1600.6" y="204.3" width="1.9" height="3.9" fill="#ff0000"/><rect x="1602.9" y="202.6" width="1.9" height="3.9" fill="#ff0000"/><rect x="1607.5" y="198.7" width="1.9" height="3.8" fill="#ff0000"/><rect x="1609.8" y="197.6" width="1.9" height="3.1" fill="#ff0000"/><rect x="1612.1" y="197.9" width="1.9" height="2.5" fill="#1e82f0"/><rect x="1614.4" y="198.7" width="1.9" height="5.2" fill="#1e82f0"/><rect x="1616.7" y="202.0" width="1.9" height="5.5" fill="#1e82f0"/><rect x="1619.0" y="204.1" width="1.9" height="3.1" fill="#1e82f0"/><rect x="1621.3" y="203.5" width="1.9" height="2.6" fill="#1e82f0"/><rect x="1623.6" y="202.8" width="1.9" height="2.7" fill="#1e82f0"/><rect x="1625.9" y="203.4" width="1.9" height="5.0" fill="#1e82f0"/><rect x="1628.2" y="205.2" width="1.9" height="6.6" fill="#1e82f0"/><rect x="1630.5" y="208.6" width="1.9" height="6.2" fill="#1e82f0"/><rect x="1632.8" y="212.0" width="1.9" height="3.4" fill="#1e82f0"/><rect x="1635.1" y="213.7" width="1.9" height="3.2" fill="#1e82f0"/><rect x="1637.4" y="212.4" width="1.9" height="3.7" fill="#ff0000"/><rect x="1639.7" y="209.4" width="1.9" height="5.3" fill="#ff0000"/><rect x="1642.0" y="209.1" width="1.9" height="4.7" fill="#1e82f0"/><rect x="1644.3" y="211.7" width="1.9" height="4.3" fill="#1e82f0"/><rect x="1646.6" y="213.2" width="1.9" height="5.2" fill="#ffff80"/><rect x="1648.9" y="213.9" width="1.9" height="3.6" fill="#ff0000"/><rect x="1651.2" y="211.2" width="1.9" height="4.4" fill="#ff0000"/><rect x="1653.5" y="210.9" width="1.9" height="4.4" fill="#ffff80"/><rect x="1655.8" y="213.0" width="1.9" height="4.8" fill="#1e82f0"/><rect x="1658.1" y="215.3" width="1.9" height="3.8" fill="#1e82f0"/><rect x="1660.4" y="213.0" width="1.9" height="5.8" fill="#ff0000"/><rect x="1662.7" y="210.0" width="1.9" height="5.8" fill="#ff0000"/><rect x="1665.0" y="206.7" width="1.9" height="5.7" fill="#ff0000"/><rect x="1667.3" y="204.6" width="1.9" height="4.7" fill="#ff0000"/><rect x="1669.6" y="201.1" width="1.9" height="5.1" fill="#ff0000"/><rect x="1671.9" y="199.4" width="1.9" height="3.6" fill="#ff0000"/><rect x="1674.2" y="199.3" width="1.9" height="2.6" fill="#ff0000"/><rect x="1676.5" y="198.4" width="1.9" height="2.9" fill="#1e82f0"/><rect x="1678.8" y="198.2" width="1.9" height="5.4" fill="#1e82f0"/><rect x="1681.1" y="200.6" width="1.9" height="5.5" fill="#1e82f0"/><rect x="1683.4" y="204.3" width="1.9" height="4.2" fill="#1e82f0"/><rect x="1685.7" y="206.3" width="1.9" height="3.0" fill="#1e82f0"/><rect x="1688.0" y="207.6" width="1.9" height="3.4" fill="#ff0000"/><rect x="1690.3" y="208.3" width="1.9" height="3.6" fill="#1e82f0"/><rect x="1692.6" y="209.4" width="1.9" height="2.3" fill="#1e82f0"/><rect x="1694.9" y="209.1" width="1.9" height="2.9" fill="#ffff80"/><rect x="1697.2" y="207.7" width="1.9" height="4.3" fill="#ff0000"/><rect x="1699.5" y="205.3" width="1.9" height="5.3" fill="#1e82f0"/><rect x="1701.8" y="202.9" width="1.9" height="4.7" fill="#ff0000"/><rect x="1704.1" y="199.6" width="1.9" height="5.9" fill="#ff0000"/><rect x="1706.4" y="194.9" width="1.9" height="6.3" fill="#ff0000"/><rect x="1708.7" y="192.5" width="1.9" height="3.9" fill="#ff0000"/><rect x="1711.0" y="190.5" width="1.9" height="4.0" fill="#ff0000"/><rect x="1713.3" y="189.3" width="1.9" height="4.2" fill="#ff0000"/><rect x="1715.6" y="187.9" width="1.9" height="4.1" fill="#ff0000"/><rect x="1717.9" y="186.6" width="1.9" height="3.7" fill="#ff0000"/><rect x="1720.2" y="184.5" width="1.9" height="3.9" fill="#1e82f0"/><rect x="1722.5" y="183.5" width="1.9" height="3.3" fill="#ff0000"/><rect x="1724.8" y="183.5" width="1.9" height="2.5" fill="#1e82f0"/><rect x="1727.1" y="182.6" width="1.9" height="3.1" fill="#ffff80"/><rect x="1729.4" y="175.6" width="1.9" height="9.7" fill="#ff0000"/><rect x="1731.7" y="170.4" width="1.9" height="8.2" fill="#ff0000"/><rect x="1734.0" y="167.7" width="1.9" height="4.8" fill="#ff0000"/><rect x="1736.3" y="165.6" width="1.9" height="5.0" fill="#1e82f0"/><rect x="1738.6" y="163.3" width="1.9" height="4.5" fill="#ff0000"/><rect x="1740.9" y="160.8" width="1.9" height="4.2" fill="#ff0000"/><rect x="1743.2" y="160.7" width="1.9" height="3.2" fill="#ffff80"/><rect x="1745.5" y="160.9" width="1.9" height="2.8" fill="#1e82f0"/><rect x="1747.8" y="161.1" width="1.9" height="3.1" fill="#1e82f0"/><rect x="1750.1" y="161.7" width="1.9" height="2.6" fill="#1e82f0"/><rect x="1752.4" y="159.3" width="1.9" height="3.9" fill="#ff0000"/><rect x="1754.7" y="157.0" width="1.9" height="4.0" fill="#ffff80"/><rect x="1757.0" y="153.7" width="1.9" height="5.7" fill="#ff0000"/><rect x="1761.6" y="148.7" width="1.9" height="4.5" fill="#1e82f0"/><rect x="1763.9" y="147.7" width="1.9" height="3.2" fill="#ff0000"/><rect x="1768.5" y="145.1" width="1.9" height="3.7" fill="#ff0000"/><rect x="1770.8" y="141.2" width="1.9" height="5.5" fill="#ff0000"/><rect x="1773.1" y="139.2" width="1.9" height="5.4" fill="#ffff80"/><rect x="1775.4" y="142.8" width="1.9" height="7.5" fill="#ff0000"/><rect x="1777.7" y="147.7" width="1.9" height="8.4" fill="#1e82f0"/><rect x="1780.0" y="153.9" width="1.9" height="4.2" fill="#1e82f0"/><rect x="1782.3" y="154.0" width="1.9" height="3.6" fill="#ffff80"/><rect x="1784.6" y="153.3" width="1.9" height="2.8" fill="#ff0000"/><rect x="1786.9" y="152.4" width="1.9" height="3.0" fill="#ff0000"/><rect x="1789.2" y="153.7" width="1.9" height="6.8" fill="#1e82f0"/><rect x="1791.5" y="152.2" width="1.9" height="8.3" fill="#ff0000"/><rect x="1793.8" y="144.9" width="1.9" height="10.1" fill="#ff0000"/><rect x="1796.1" y="144.0" width="1.9" height="3.3" fill="#1e82f0"/><rect x="1798.4" y="144.0" width="1.9" height="2.7" fill="#ffff80"/><rect x="1800.7" y="144.6" width="1.9" height="4.2" fill="#1e82f0"/><rect x="1805.3" y="149.2" width="1.9" height="5.4" fill="#1e82f0"/><rect x="1807.6" y="152.2" width="1.9" height="4.8" fill="#1e82f0"/><rect x="1809.9" y="154.6" width="1.9" height="7.7" fill="#1e82f0"/><rect x="1812.2" y="160.1" width="1.9" height="6.6" fill="#1e82f0"/><rect x="1814.5" y="164.8" width="1.9" height="9.2" fill="#1e82f0"/><rect x="1816.8" y="170.6" width="1.9" height="4.9" fill="#ff0000"/><rect x="1819.1" y="168.0" width="1.9" height="4.3" fill="#ff0000"/><rect x="1821.4" y="165.5" width="1.9" height="4.9" fill="#ff0000"/><rect x="1826.0" y="168.9" width="1.9" height="5.8" fill="#1e82f0"/><rect x="1828.3" y="172.8" width="1.9" height="2.5" fill="#ffff80"/><rect x="1830.6" y="172.4" width="1.9" height="2.7" fill="#ffff80"/><rect x="1832.9" y="171.6" width="1.9" height="3.3" fill="#ff0000"/><rect x="1835.2" y="169.1" width="1.9" height="4.3" fill="#ffff80"/><rect x="1837.5" y="168.0" width="1.9" height="3.7" fill="#ff0000"/><rect x="1839.8" y="162.4" width="1.9" height="7.5" fill="#ff0000"/><rect x="1842.1" y="152.9" width="1.9" height="11.7" fill="#ffff80"/><rect x="1844.4" y="147.5" width="1.9" height="7.9" fill="#ff0000"/><rect x="1846.7" y="142.5" width="1.9" height="8.1" fill="#ffff80"/><rect x="1849.0" y="141.7" width="1.9" height="3.6" fill="#ffff80"/><rect x="1853.6" y="141.0" width="1.9" height="2.9" fill="#1e82f0"/><rect x="1855.9" y="140.9" width="1.9" height="3.3" fill="#ffff80"/><rect x="1858.2" y="141.6" width="1.9" height="6.8" fill="#1e82f0"/><rect x="1860.5" y="146.0" width="1.9" height="7.7" fill="#1e82f0"/><rect x="1862.8" y="150.8" width="1.9" height="6.0" fill="#ff0000"/><rect x="1865.1" y="154.0" width="1.9" height="5.0" fill="#1e82f0"/><rect x="1867.4" y="156.0" width="1.9" height="4.4" fill="#ffff80"/><rect x="1869.7" y="158.8" width="1.9" height="2.8" fill="#ffff80"/><rect x="1872.0" y="159.8" width="1.9" height="2.9" fill="#1e82f0"/><rect x="1874.3" y="159.9" width="1.9" height="3.0" fill="#ff0000"/><rect x="1876.6" y="160.8" width="1.9" height="3.0" fill="#ffff80"/><rect x="1878.9" y="161.3" width="1.9" height="3.6" fill="#ffff80"/><rect x="1881.2" y="162.3" width="1.9" height="2.9" fill="#ffff80"/><rect x="1883.5" y="162.1" width="1.9" height="3.6" fill="#ffff80"/><rect x="1888.1" y="162.0" width="1.9" height="3.4" fill="#ff0000"/><rect x="1890.4" y="161.6" width="1.9" height="3.8" fill="#1e82f0"/><rect x="1892.7" y="162.5" width="1.9" height="6.6" fill="#ff0000"/><rect x="1895.0" y="166.0" width="1.9" height="6.1" fill="#1e82f0"/><rect x="1897.3" y="169.9" width="1.9" height="6.0" fill="#1e82f0"/><rect x="1899.6" y="173.5" width="1.9" height="2.0" fill="#ff0000"/>
<rect x="797" y="164.5" width="3" height="2.5" fill="#ffff80"/>
<rect x="151.8" y="678.0" width="1.8" height="29.8" fill="#1e82f0"/><rect x="154.0" y="687.1" width="1.8" height="11.7" fill="#ff0000"/><rect x="158.4" y="685.0" width="1.8" height="4.3" fill="#ff0000"/><rect x="160.6" y="684.3" width="1.8" height="4.2" fill="#1e82f0"/><rect x="162.8" y="682.9" width="1.8" height="4.6" fill="#ff0000"/><rect x="165.0" y="680.9" width="1.8" height="4.4" fill="#ff0000"/><rect x="167.2" y="678.5" width="1.8" height="5.1" fill="#ff0000"/><rect x="171.6" y="689.7" width="1.8" height="4.0" fill="#ffff80"/><rect x="173.8" y="688.0" width="1.8" height="4.6" fill="#ff0000"/><rect x="176.0" y="686.9" width="1.8" height="4.3" fill="#ff0000"/><rect x="178.2" y="680.7" width="1.8" height="9.3" fill="#ff0000"/><rect x="180.4" y="672.4" width="1.8" height="10.5" fill="#ff0000"/><rect x="182.6" y="671.7" width="1.8" height="13.0" fill="#ff0000"/><rect x="184.8" y="666.7" width="1.8" height="10.7" fill="#ff0000"/><rect x="187.0" y="657.5" width="1.8" height="11.7" fill="#1e82f0"/><rect x="189.2" y="656.1" width="1.8" height="38.2" fill="#1e82f0"/><rect x="193.6" y="687.5" width="1.8" height="4.4" fill="#ffff80"/><rect x="195.8" y="683.7" width="1.8" height="6.6" fill="#ff0000"/><rect x="198.0" y="679.5" width="1.8" height="6.1" fill="#ff0000"/><rect x="200.2" y="674.4" width="1.8" height="7.3" fill="#1e82f0"/><rect x="204.6" y="668.4" width="1.8" height="4.5" fill="#ff0000"/><rect x="211.2" y="664.7" width="1.8" height="4.0" fill="#ff0000"/><rect x="215.6" y="663.0" width="1.8" height="13.1" fill="#ff0000"/><rect x="217.8" y="658.6" width="1.8" height="12.0" fill="#ff0000"/><rect x="220.0" y="650.0" width="1.8" height="11.2" fill="#ff0000"/><rect x="222.2" y="645.1" width="1.8" height="14.0" fill="#ffff80"/><rect x="224.4" y="631.3" width="1.8" height="16.0" fill="#ffff80"/><rect x="226.6" y="633.8" width="1.8" height="9.4" fill="#ff0000"/><rect x="231.0" y="644.7" width="1.8" height="4.1" fill="#ff0000"/><rect x="235.4" y="648.7" width="1.8" height="5.3" fill="#ff0000"/><rect x="237.6" y="650.5" width="1.8" height="5.1" fill="#1e82f0"/><rect x="239.8" y="651.8" width="1.8" height="5.1" fill="#ff0000"/><rect x="244.2" y="645.2" width="1.8" height="4.6" fill="#ff0000"/><rect x="246.4" y="645.2" width="1.8" height="5.5" fill="#1e82f0"/><rect x="248.6" y="648.4" width="1.8" height="5.8" fill="#1e82f0"/><rect x="250.8" y="652.1" width="1.8" height="4.8" fill="#1e82f0"/><rect x="255.2" y="654.5" width="1.8" height="3.7" fill="#ff0000"/><rect x="257.4" y="653.8" width="1.8" height="3.1" fill="#ff0000"/><rect x="259.6" y="651.9" width="1.8" height="4.5" fill="#ff0000"/><rect x="261.8" y="650.1" width="1.8" height="5.3" fill="#ff0000"/><rect x="266.2" y="695.8" width="1.8" height="9.3" fill="#ff0000"/><rect x="268.4" y="687.9" width="1.8" height="10.2" fill="#ffff80"/><rect x="270.6" y="685.0" width="1.8" height="15.7" fill="#1e82f0"/><rect x="272.8" y="672.6" width="1.8" height="21.6" fill="#ff0000"/><rect x="275.0" y="663.6" width="1.8" height="12.2" fill="#ff0000"/><rect x="277.2" y="662.9" width="1.8" height="3.6" fill="#1e82f0"/><rect x="279.4" y="661.9" width="1.8" height="3.9" fill="#ffff80"/><rect x="281.6" y="660.4" width="1.8" height="3.6" fill="#ff0000"/><rect x="286.0" y="658.7" width="1.8" height="5.7" fill="#ff0000"/><rect x="288.2" y="661.1" width="1.8" height="8.6" fill="#ffff80"/><rect x="290.4" y="667.0" width="1.8" height="5.0" fill="#1e82f0"/><rect x="292.6" y="665.8" width="1.8" height="5.4" fill="#ff0000"/><rect x="294.8" y="663.9" width="1.8" height="4.2" fill="#1e82f0"/><rect x="299.2" y="663.8" width="1.8" height="4.7" fill="#1e82f0"/><rect x="301.4" y="664.9" width="1.8" height="5.1" fill="#1e82f0"/><rect x="305.8" y="668.6" width="1.8" height="4.6" fill="#1e82f0"/><rect x="308.0" y="669.6" width="1.8" height="4.0" fill="#ff0000"/><rect x="312.4" y="659.3" width="1.8" height="7.1" fill="#ff0000"/><rect x="314.6" y="656.5" width="1.8" height="5.4" fill="#ff0000"/><rect x="316.8" y="656.6" width="1.8" height="4.6" fill="#1e82f0"/><rect x="319.0" y="659.0" width="1.8" height="4.6" fill="#1e82f0"/><rect x="321.2" y="661.5" width="1.8" height="5.1" fill="#1e82f0"/><rect x="323.4" y="662.9" width="1.8" height="4.4" fill="#1e82f0"/><rect x="325.6" y="664.7" width="1.8" height="4.1" fill="#1e82f0"/><rect x="327.8" y="667.2" width="1.8" height="3.2" fill="#1e82f0"/>
<rect x="370.1" y="663.4" width="1.9" height="10.300000000000068" fill="#ff0000"/>
<rect x="371.6" y="645" width="1.9" height="18" fill="#ff0000"/>
<rect x="373.1" y="637" width="1.9" height="18" fill="#ff0000"/>
<rect x="374.6" y="636.8" width="1.9" height="8.900000000000091" fill="#1e82f0"/>
<rect x="375.9" y="634" width="3.2" height="2" fill="#ff0000"/>
<rect x="379.1" y="632" width="1.9" height="8" fill="#1e82f0"/>
<rect x="381.1" y="629.4" width="1.9" height="4.600000000000023" fill="#ff0000"/>
<rect x="382.40000000000003" y="627" width="1.9" height="13" fill="#1e82f0"/>
<rect x="377.5" y="639" width="3.2" height="2" fill="#f0e070"/>
<rect x="383.5" y="639" width="3.2" height="2" fill="#f0e070"/>
<rect x="386.5" y="645.4" width="3.2" height="2.0" fill="#1e82f0"/>
<rect x="388.5" y="647" width="3.2" height="2" fill="#ff0000"/>
<rect x="389.5" y="652.8" width="3.2" height="2.0" fill="#f0e070"/>
<rect x="393.0" y="648.4" width="3.2" height="2.0" fill="#f0e070"/>
<rect x="397.2" y="647" width="3.2" height="2" fill="#f0e070"/>
<rect x="400.5" y="648.4" width="3.2" height="2.0" fill="#1e82f0"/>
<rect x="402.5" y="642.5" width="3.2" height="2.0" fill="#1e82f0"/>
<rect x="404.1" y="633.9" width="1.9" height="13.100000000000023" fill="#ff0000"/>
<rect x="405.6" y="627" width="1.9" height="11" fill="#ff0000"/>
<rect x="408.0" y="622.5" width="3.2" height="2.0" fill="#ff0000"/>
<rect x="411.1" y="623.5" width="1.9" height="5.899999999999977" fill="#1e82f0"/>
<rect x="414.6" y="611.7" width="1.9" height="13.299999999999955" fill="#ff0000"/>
<rect x="416.5" y="620.3" width="3.2" height="2.0" fill="#f0e070"/>
<rect x="426.5" y="593.7" width="3.2" height="2.0" fill="#f0e070"/>
<rect x="430.1" y="595.5" width="1.9" height="5.5" fill="#1e82f0"/>
<rect x="432.1" y="597" width="1.9" height="5.7999999999999545" fill="#ff0000"/>
<rect x="434.6" y="596" width="1.9" height="5" fill="#ff0000"/>
<rect x="435.5" y="597" width="3.2" height="2" fill="#1e82f0"/>
<rect x="437.5" y="587" width="3.2" height="2" fill="#ff0000"/>
<rect x="440.5" y="584.4" width="3.2" height="2.0" fill="#f0e070"/>
<rect x="445.0" y="576" width="3.2" height="2" fill="#ff0000"/>
<rect x="450.5" y="573.8" width="3.2" height="2.0" fill="#f0e070"/>
<rect x="451.5" y="578.2" width="3.2" height="2.0" fill="#ff0000"/>
<rect x="461.0" y="579" width="3.2" height="2" fill="#ff0000"/>
<rect x="465.5" y="570" width="3.2" height="2" fill="#1e82f0"/>
<rect x="340.1" y="679.6" width="1.9" height="5.899999999999977" fill="#1e82f0"/>
<rect x="345.1" y="687" width="1.9" height="13" fill="#1e82f0"/>
<rect x="349.1" y="688" width="3.2" height="2" fill="#ff0000"/>
<rect x="356.1" y="682" width="1.9" height="11" fill="#1e82f0"/>
<rect x="357.6" y="688" width="1.9" height="5" fill="#ff0000"/>
<rect x="360.70000000000005" y="685.5" width="1.9" height="25.200000000000045" fill="#1e82f0"/>
<rect x="19.5" y="503.4" width="3.5" height="2.2" fill="#f0e070"/>
<rect x="21.8" y="507.8" width="3.5" height="2.2" fill="#1e82f0"/>
<rect x="32.9" y="506.7" width="3.5" height="2.2" fill="#f0e070"/>
<rect x="42.9" y="511.0" width="3.5" height="2.2" fill="#f0e070"/>
<rect x="46.2" y="516.7" width="3.5" height="2.2" fill="#ff0000"/>
<rect x="48.5" y="512.0" width="3.5" height="2.2" fill="#f0e070"/>
<rect x="65.0" y="514.5" width="3.5" height="2.2" fill="#f0e070"/>
<rect x="79.5" y="510.0" width="3.5" height="2.2" fill="#f0e070"/>
<rect x="107.1" y="517.8" width="3.5" height="2.2" fill="#f0e070"/>
<rect x="122.5" y="530.0" width="3.5" height="2.2" fill="#ff0000"/>
<rect x="139.3" y="509.4" width="3.5" height="2.2" fill="#f0e070"/>
<rect x="455.1" y="573.8" width="3.5" height="2.2" fill="#f0e070"/>
<rect x="461.3" y="579.0" width="3.5" height="2.2" fill="#1e82f0"/>
<rect x="465.3" y="570.8" width="3.5" height="2.2" fill="#ff0000"/>
<rect x="473.5" y="582.0" width="3.5" height="2.2" fill="#1e82f0"/>
<rect x="483.6" y="570.8" width="3.5" height="2.2" fill="#ff0000"/>
<rect x="490.8" y="565.7" width="3.5" height="2.2" fill="#ff0000"/>
<rect x="498.9" y="562.0" width="3.5" height="2.2" fill="#ff0000"/>
<rect x="506.0" y="558.6" width="3.5" height="2.2" fill="#1e82f0"/>
<rect x="514.2" y="572.8" width="3.5" height="2.2" fill="#f0e070"/>
<rect x="524.4" y="564.7" width="3.5" height="2.2" fill="#ff0000"/>
<rect x="529.5" y="558.6" width="3.5" height="2.2" fill="#f0e070"/>
<rect x="540.6" y="556.5" width="3.5" height="2.2" fill="#f0e070"/>
<rect x="552.9" y="558.6" width="3.5" height="2.2" fill="#1e82f0"/>
<rect x="561.0" y="546.4" width="3.5" height="2.2" fill="#ff0000"/>
<rect x="567.1" y="555.5" width="3.5" height="2.2" fill="#1e82f0"/>
<rect x="575.3" y="547.4" width="3.5" height="2.2" fill="#1e82f0"/>
<rect x="581.4" y="550.4" width="3.5" height="2.2" fill="#f0e070"/>
<rect x="587.5" y="544.3" width="3.5" height="2.2" fill="#f0e070"/>
<rect x="593.6" y="554.5" width="3.5" height="2.2" fill="#f0e070"/>
<rect x="601.7" y="545.3" width="3.5" height="2.2" fill="#f0e070"/>
<rect x="609.9" y="540.3" width="3.5" height="2.2" fill="#ff0000"/>
<rect x="618.0" y="549.4" width="3.5" height="2.2" fill="#f0e070"/>
<rect x="624.1" y="542.3" width="3.5" height="2.2" fill="#f0e070"/>
<rect x="626.2" y="552.5" width="3.5" height="2.2" fill="#f0e070"/>
<rect x="638.4" y="551.5" width="3.5" height="2.2" fill="#f0e070"/>
<rect x="644.5" y="547.4" width="3.5" height="2.2" fill="#ff0000"/>
<rect x="648.5" y="540.3" width="3.5" height="2.2" fill="#f0e070"/>
<rect x="654.7" y="530.1" width="3.5" height="2.2" fill="#f0e070"/>
<rect x="666.9" y="533.1" width="3.5" height="2.2" fill="#f0e070"/>
<rect x="673.0" y="528.0" width="3.5" height="2.2" fill="#ff0000"/>
<rect x="681.1" y="524.0" width="3.5" height="2.2" fill="#1e82f0"/>
<rect x="687.2" y="515.8" width="3.5" height="2.2" fill="#f0e070"/>
<rect x="695.4" y="506.7" width="3.5" height="2.2" fill="#f0e070"/>
<rect x="703.5" y="511.8" width="3.5" height="2.2" fill="#1e82f0"/>
<rect x="707.6" y="487.3" width="3.5" height="2.2" fill="#1e82f0"/>
<rect x="717.8" y="483.3" width="3.5" height="2.2" fill="#f0e070"/>
<rect x="723.9" y="497.5" width="3.5" height="2.2" fill="#f0e070"/>
<rect x="727.9" y="507.7" width="3.5" height="2.2" fill="#f0e070"/>
<rect x="734.0" y="508.7" width="3.5" height="2.2" fill="#f0e070"/>
<rect x="739.1" y="518.9" width="3.5" height="2.2" fill="#f0e070"/>
<rect x="742.2" y="510.7" width="3.5" height="2.2" fill="#f0e070"/>
<rect x="746.3" y="503.6" width="3.5" height="2.2" fill="#f0e070"/>
<rect x="748.3" y="511.8" width="3.5" height="2.2" fill="#f0e070"/>
<rect x="764.6" y="486.0" width="3.5" height="2.2" fill="#f0e070"/>
<rect x="774.8" y="489.4" width="3.5" height="2.2" fill="#f0e070"/>
<rect x="784.9" y="492.4" width="3.5" height="2.2" fill="#f0e070"/>
<rect x="791.1" y="501.6" width="3.5" height="2.2" fill="#ff0000"/>
<rect x="795.1" y="507.7" width="3.5" height="2.2" fill="#ff0000"/>
<rect x="799.2" y="520.9" width="3.5" height="2.2" fill="#f0e070"/>
<rect x="809.4" y="529.0" width="3.5" height="2.2" fill="#ff0000"/>
<rect x="819.6" y="530.1" width="3.5" height="2.2" fill="#ff0000"/>
<rect x="825.7" y="540.3" width="3.5" height="2.2" fill="#f0e070"/>
<rect x="822.5" y="536.4" width="3.5" height="2.2" fill="#f0e070"/>
<rect x="826.6" y="540.0" width="3.5" height="2.2" fill="#f0e070"/>
<rect x="847.0" y="569.0" width="3.5" height="2.2" fill="#1e82f0"/>
<rect x="852.1" y="562.0" width="3.5" height="2.2" fill="#f0e070"/>
<rect x="856.2" y="553.7" width="3.5" height="2.2" fill="#f0e070"/>
<rect x="867.4" y="554.7" width="3.5" height="2.2" fill="#f0e070"/>
<rect x="862.3" y="546.5" width="3.5" height="2.2" fill="#ff0000"/>
<rect x="872.5" y="542.5" width="3.5" height="2.2" fill="#f0e070"/>
<rect x="877.5" y="546.5" width="3.5" height="2.2" fill="#ff0000"/>
<rect x="885.7" y="547.6" width="3.5" height="2.2" fill="#f0e070"/>
<rect x="891.8" y="551.6" width="3.5" height="2.2" fill="#ff0000"/>
<rect x="894.8" y="556.7" width="3.5" height="2.2" fill="#1e82f0"/>
<rect x="902.0" y="560.8" width="3.5" height="2.2" fill="#f0e070"/>
<rect x="906.0" y="553.7" width="3.5" height="2.2" fill="#f0e070"/>
<rect x="910.1" y="548.6" width="3.5" height="2.2" fill="#f0e070"/>
<rect x="913.2" y="539.0" width="3.5" height="2.2" fill="#ff0000"/>
<rect x="922.3" y="528.2" width="3.5" height="2.2" fill="#1e82f0"/>
<rect x="928.4" y="513.0" width="3.5" height="2.2" fill="#ff0000"/>
<rect x="936.5" y="509.9" width="3.5" height="2.2" fill="#f0e070"/>
<rect x="941.7" y="503.8" width="3.5" height="2.2" fill="#f0e070"/>
<rect x="955.9" y="541.5" width="3.5" height="2.2" fill="#ff0000"/>
<rect x="963.0" y="546.5" width="3.5" height="2.2" fill="#f0e070"/>
<rect x="968.1" y="547.6" width="3.5" height="2.2" fill="#f0e070"/>
<rect x="971.2" y="554.7" width="3.5" height="2.2" fill="#f0e070"/>
<rect x="977.3" y="548.6" width="3.5" height="2.2" fill="#f0e070"/>
<rect x="987.5" y="548.6" width="3.5" height="2.2" fill="#f0e070"/>
<rect x="995.6" y="545.5" width="3.5" height="2.2" fill="#ff0000"/>
<rect x="1001.7" y="534.3" width="3.5" height="2.2" fill="#f0e070"/>
<rect x="1026.2" y="549.6" width="3.5" height="2.2" fill="#f0e070"/>
<rect x="1037.3" y="570.0" width="3.5" height="2.2" fill="#f0e070"/>
<rect x="1039.4" y="578.1" width="3.5" height="2.2" fill="#f0e070"/>
<rect x="1048.5" y="566.9" width="3.5" height="2.2" fill="#ff0000"/>
<rect x="1060.8" y="579.1" width="3.5" height="2.2" fill="#f0e070"/>
<rect x="1082.1" y="566.9" width="3.5" height="2.2" fill="#ff0000"/>
<rect x="1090.3" y="554.7" width="3.5" height="2.2" fill="#f0e070"/>
<rect x="1092.3" y="545.5" width="3.5" height="2.2" fill="#f0e070"/>
<rect x="1099.4" y="557.7" width="3.5" height="2.2" fill="#ff0000"/>
<rect x="1104.5" y="565.9" width="3.5" height="2.2" fill="#ff0000"/>
<rect x="1110.6" y="563.8" width="3.5" height="2.2" fill="#ff0000"/>
<rect x="1123.9" y="563.8" width="3.5" height="2.2" fill="#1e82f0"/>
<rect x="1129.0" y="563.8" width="3.5" height="2.2" fill="#f0e070"/>
<rect x="1138.1" y="578.1" width="3.5" height="2.2" fill="#f0e070"/>
<rect x="1141.2" y="570.0" width="3.5" height="2.2" fill="#ff0000"/>
<rect x="1148.3" y="570.0" width="3.5" height="2.2" fill="#f0e070"/>
<rect x="1153.4" y="556.7" width="3.5" height="2.2" fill="#f0e070"/>
<rect x="1161.5" y="544.0" width="3.5" height="2.2" fill="#f0e070"/>
<rect x="1187.0" y="522.1" width="3.5" height="2.2" fill="#ff0000"/>
<rect x="1198.2" y="505.8" width="3.5" height="2.2" fill="#1e82f0"/>
<rect x="1201.2" y="497.7" width="3.5" height="2.2" fill="#ff0000"/>
<rect x="1209.4" y="491.6" width="3.5" height="2.2" fill="#1e82f0"/>
<rect x="1217.5" y="487.5" width="3.5" height="2.2" fill="#ff0000"/>
<rect x="1219.6" y="481.4" width="3.5" height="2.2" fill="#f0e070"/>
<rect x="1225.7" y="477.3" width="3.5" height="2.2" fill="#f0e070"/>
<rect x="1220.5" y="484.1" width="3.5" height="2.2" fill="#ff0000"/>
<rect x="1222.6" y="478.0" width="3.5" height="2.2" fill="#f0e070"/>
<rect x="1227.7" y="479.0" width="3.5" height="2.2" fill="#ff0000"/>
<rect x="1249.0" y="486.2" width="3.5" height="2.2" fill="#f0e070"/>
<rect x="1254.1" y="480.0" width="3.5" height="2.2" fill="#f0e070"/>
<rect x="1259.2" y="487.2" width="3.5" height="2.2" fill="#f0e070"/>
<rect x="1263.3" y="494.3" width="3.5" height="2.2" fill="#f0e070"/>
<rect x="1268.4" y="484.1" width="3.5" height="2.2" fill="#1e82f0"/>
<rect x="1278.5" y="484.1" width="3.5" height="2.2" fill="#1e82f0"/>
<rect x="1290.8" y="480.0" width="3.5" height="2.2" fill="#f0e070"/>
<rect x="1295.9" y="470.0" width="3.5" height="2.2" fill="#f0e070"/>
<rect x="1311.1" y="483.1" width="3.5" height="2.2" fill="#f0e070"/>
<rect x="1314.2" y="514.0" width="3.5" height="2.2" fill="#f0e070"/>
<rect x="1322.3" y="502.0" width="3.5" height="2.2" fill="#f0e070"/>
<rect x="1330.5" y="512.6" width="3.5" height="2.2" fill="#f0e070"/>
<rect x="1340.7" y="517.7" width="3.5" height="2.2" fill="#ff0000"/>
<rect x="1344.7" y="509.6" width="3.5" height="2.2" fill="#f0e070"/>
<rect x="1351.8" y="513.7" width="3.5" height="2.2" fill="#ff0000"/>
<rect x="1379.3" y="481.1" width="3.5" height="2.2" fill="#f0e070"/>
<rect x="1385.4" y="477.0" width="3.5" height="2.2" fill="#f0e070"/>
<rect x="1394.6" y="474.0" width="3.5" height="2.2" fill="#f0e070"/>
<rect x="1400.7" y="463.8" width="3.5" height="2.2" fill="#f0e070"/>
<rect x="1412.9" y="460.7" width="3.5" height="2.2" fill="#f0e070"/>
<rect x="1421.1" y="470.9" width="3.5" height="2.2" fill="#ff0000"/>
<rect x="1442.5" y="468.9" width="3.5" height="2.2" fill="#f0e070"/>
<rect x="1454.7" y="470.9" width="3.5" height="2.2" fill="#f0e070"/>
<rect x="1477.0" y="457.7" width="3.5" height="2.2" fill="#f0e070"/>
<rect x="1480.1" y="454.6" width="3.5" height="2.2" fill="#ff0000"/>
<rect x="1503.5" y="485.2" width="3.5" height="2.2" fill="#ff0000"/>
<rect x="1507.6" y="477.0" width="3.5" height="2.2" fill="#f0e070"/>
<rect x="1529.0" y="461.8" width="3.5" height="2.2" fill="#f0e070"/>
<rect x="1534.1" y="453.6" width="3.5" height="2.2" fill="#1e82f0"/>
<rect x="1552.4" y="465.8" width="3.5" height="2.2" fill="#1e82f0"/>
<rect x="1557.5" y="478.0" width="3.5" height="2.2" fill="#ff0000"/>
<rect x="1569.7" y="451.6" width="3.5" height="2.2" fill="#f0e070"/>
<rect x="1571.7" y="457.7" width="3.5" height="2.2" fill="#f0e070"/>
<rect x="1575.8" y="457.7" width="3.5" height="2.2" fill="#ff0000"/>
<rect x="1625.0" y="461.2" width="3.5" height="2.2" fill="#f0e070"/>
<rect x="1663.1" y="453.4" width="3.5" height="2.2" fill="#f0e070"/>
<rect x="1668.9" y="448.6" width="3.5" height="2.2" fill="#1e82f0"/>
<rect x="1670.6" y="445.5" width="3.5" height="2.2" fill="#1e82f0"/>
<rect x="1676.1" y="448.6" width="3.5" height="2.2" fill="#f0e070"/>
<rect x="1681.6" y="456.6" width="3.5" height="2.2" fill="#f0e070"/>
<rect x="1710.4" y="448.6" width="3.5" height="2.2" fill="#ff0000"/>
<rect x="1713.5" y="445.5" width="3.5" height="2.2" fill="#f0e070"/>
<rect x="1722.2" y="444.3" width="3.5" height="2.2" fill="#f0e070"/>
<rect x="1730.8" y="436.0" width="3.5" height="2.2" fill="#ff0000"/>
<rect x="1741.6" y="434.5" width="3.5" height="2.2" fill="#ff0000"/>
<rect x="1749.5" y="431.4" width="3.5" height="2.2" fill="#f0e070"/>
<rect x="1752.4" y="429.9" width="3.5" height="2.2" fill="#f0e070"/>
<rect x="1775.5" y="433.1" width="3.5" height="2.2" fill="#f0e070"/>
<rect x="1778.3" y="438.6" width="3.5" height="2.2" fill="#f0e070"/>
<rect x="1787.7" y="434.5" width="3.5" height="2.2" fill="#1e82f0"/>
<rect x="1794.2" y="426.8" width="3.5" height="2.2" fill="#f0e070"/>
<rect x="1798.5" y="425.3" width="3.5" height="2.2" fill="#f0e070"/>
<rect x="1803.5" y="429.9" width="3.5" height="2.2" fill="#ff0000"/>
<rect x="1805.0" y="420.6" width="3.5" height="2.2" fill="#f0e070"/>
<rect x="1811.5" y="428.5" width="3.5" height="2.2" fill="#f0e070"/>
<rect x="1837.1" y="437.8" width="3.5" height="2.2" fill="#f0e070"/>
<rect x="1851.0" y="423.4" width="3.5" height="2.2" fill="#f0e070"/>
<rect x="1852.5" y="428.5" width="3.5" height="2.2" fill="#f0e070"/>
<rect x="1859.0" y="426.8" width="3.5" height="2.2" fill="#1e82f0"/>
<rect x="1866.9" y="426.8" width="3.5" height="2.2" fill="#f0e070"/>
<rect x="1869.8" y="422.0" width="3.5" height="2.2" fill="#f0e070"/>
<rect x="1873.4" y="422.0" width="3.5" height="2.2" fill="#ff0000"/>
<rect x="1874.5" y="429.9" width="3.5" height="2.2" fill="#f0e070"/>
<rect x="1880.6" y="429.9" width="3.5" height="2.2" fill="#f0e070"/>
<rect x="1888.5" y="431.4" width="3.5" height="2.2" fill="#f0e070"/>
<rect x="1889.9" y="418.8" width="3.5" height="2.2" fill="#f0e070"/>
<rect x="1896.4" y="423.9" width="3.5" height="2.2" fill="#1e82f0"/>
<rect x="469.4" y="575.2" width="3.2" height="2.1" fill="#ff0000"/>
<rect x="494.9" y="566.1" width="3.2" height="2.1" fill="#ff0000"/>
<rect x="510.7" y="565.3" width="1.9" height="5.0" fill="#ff0000"/>
<rect x="533.8" y="557.8" width="1.9" height="5.3" fill="#f0e070"/>
<rect x="536.9" y="559.7" width="3.2" height="2.1" fill="#f0e070"/>
<rect x="544.7" y="555.6" width="3.2" height="2.1" fill="#ff0000"/>
<rect x="548.8" y="557.5" width="3.2" height="2.1" fill="#1e82f0"/>
<rect x="571.2" y="552.8" width="3.2" height="2.1" fill="#ff0000"/>
<rect x="605.8" y="544.5" width="3.2" height="2.1" fill="#1e82f0"/>
<rect x="614.0" y="544.2" width="3.2" height="2.1" fill="#f0e070"/>
<rect x="630.3" y="550.8" width="3.2" height="2.1" fill="#1e82f0"/>
<rect x="677.0" y="528.1" width="3.2" height="2.1" fill="#1e82f0"/>
<rect x="752.4" y="506.1" width="3.2" height="2.1" fill="#f0e070"/>
<rect x="756.5" y="499.1" width="3.2" height="2.1" fill="#f0e070"/>
<rect x="760.5" y="494.2" width="3.2" height="2.1" fill="#1e82f0"/>
<rect x="769.7" y="489.9" width="3.2" height="2.1" fill="#ff0000"/>
<rect x="804.3" y="526.8" width="3.2" height="2.1" fill="#ff0000"/>
<rect x="814.5" y="531.0" width="3.2" height="2.1" fill="#1e82f0"/>
<rect x="831.3" y="543.2" width="1.9" height="5.6" fill="#f0e070"/>
<rect x="835.4" y="551.9" width="1.9" height="4.3" fill="#f0e070"/>
<rect x="842.9" y="563.0" width="3.2" height="2.1" fill="#f0e070"/>
<rect x="898.4" y="559.4" width="3.2" height="2.1" fill="#1e82f0"/>
<rect x="947.0" y="515.8" width="1.9" height="6.9" fill="#ff0000"/>
<rect x="991.5" y="546.6" width="3.2" height="2.1" fill="#1e82f0"/>
<rect x="1029.9" y="555.7" width="3.2" height="2.1" fill="#f0e070"/>
<rect x="1044.0" y="574.6" width="3.2" height="2.1" fill="#f0e070"/>
<rect x="1053.2" y="569.7" width="1.9" height="6.6" fill="#f0e070"/>
<rect x="1069.3" y="572.8" width="3.2" height="2.1" fill="#ff0000"/>
<rect x="1073.6" y="573.7" width="3.2" height="2.1" fill="#1e82f0"/>
<rect x="1078.4" y="568.6" width="1.9" height="5.5" fill="#1e82f0"/>
<rect x="1086.2" y="562.0" width="3.2" height="2.1" fill="#f0e070"/>
<rect x="1133.5" y="573.2" width="3.2" height="2.1" fill="#1e82f0"/>
<rect x="1190.7" y="518.7" width="3.2" height="2.1" fill="#ff0000"/>
<rect x="1205.9" y="494.5" width="1.9" height="6.5" fill="#f0e070"/>
<rect x="499.5" y="557.5" width="1.9" height="12.299999999999955" fill="#1e82f0"/>
<rect x="708.2" y="484" width="1.9" height="21" fill="#f0e060"/>
<rect x="765.2" y="482.2" width="1.9" height="10.199999999999989" fill="#1e82f0"/>
<rect x="852.7" y="555.7" width="1.9" height="16.299999999999955" fill="#f0e060"/>
<rect x="913.8000000000001" y="534.3" width="1.9" height="14.300000000000068" fill="#1e82f0"/>
<rect x="1162.1" y="541.4" width="1.9" height="7.2000000000000455" fill="#ff0000"/>
<rect x="1198.8" y="504.8" width="1.9" height="4.099999999999966" fill="#1e82f0"/>
<rect x="1296.5" y="466.8" width="1.9" height="8.199999999999989" fill="#1e82f0"/>
<rect x="1314.8" y="509.6" width="1.9" height="11.199999999999932" fill="#ff0000"/>
<rect x="1322.8999999999999" y="499.4" width="1.9" height="7.100000000000023" fill="#1e82f0"/>
<rect x="1478.1" y="455" width="1.9" height="7" fill="#ff0000"/>
<rect x="1778.8999999999999" y="436" width="1.9" height="5" fill="#ff0000"/>
<path d="M12.5,844.8H14.4V844.0H16.2V843.6H18.1V842.8H20.0V842.3H22.5V843.0H25.0V846.0H26.9V844.3H28.7V845.0H30.5V845.7H32.4V844.8H34.4V846.7H36.4V846.5H38.4V847.8H40.4V849.8H42.4V851.0H44.3V849.5H46.1V850.0H48.0V850.3H49.9V848.5H51.8V849.8H53.6V853.1H55.5V855.6H57.4V857.2H59.4V855.7H61.4V853.3H63.3V851.1H65.3V847.6H67.3V846.0H69.2V846.9H71.0V847.2H72.9V844.7H74.8V846.0H76.8V849.0H78.8V849.3H80.8V850.1H82.8V851.8H84.8V854.7H87.3V858.7H89.8V861.0H91.8V861.2H93.8V859.5H95.7V860.1H97.7V860.3H99.7V859.7H102.2V859.2H104.7V856.0H106.6V854.3H108.5V854.2H110.3V851.5H112.2V851.0H114.2V851.4H116.2V852.5H118.2V854.5H120.2V856.3H122.2V857.2H124.7V852.9H127.1V849.8H129.6V842.0H132.1V836.0H134.0V835.2H135.8V834.8H137.7V835.1H139.6V836.0H142.1V857.2H144.6V857.9H147.1V859.7H148.9V849.8H150.8V839.8H152.1V1019.3H154.6V829.8H157.1V827.7H159.6V827.3H161.4V823.5H163.3V819.7H165.2V817.4H167.0V812.4H169.5V823.6H172.0V834.8H174.5V839.8H177.0V842.3H179.5V847.2H182.0V852.3H183.8V862.7H185.7V874.7H187.6V897.4H189.5V919.6H191.3V907.4H193.2V897.1H195.3V895.3H197.3V894.2H199.4V894.6H201.9V890.2H204.4V884.7H206.9V896.0H209.4V904.6H211.9V896.8H214.4V889.6H216.5V886.7H218.5V884.5H220.6V882.2H222.7V889.3H224.7V897.7H226.8V904.6H228.7V902.4H230.6V899.9H232.4V900.0H234.3V897.1H236.8V889.9H239.3V882.2H241.8V892.0H244.3V904.6H246.2V906.5H248.1V907.1H249.9V907.0H251.8V908.3H253.7V907.1H255.6V906.4H257.4V903.4H259.3V902.1H261.4V905.2H263.4V908.2H265.5V912.1H267.4V898.6H269.2V884.7H271.7V861.5H274.2V837.3H276.7V854.2H279.2V869.7H281.7V853.5H284.2V834.8H286.1V823.8H287.9V814.5H289.8V805.9H291.7V794.9H293.6V799.5H295.4V802.7H297.2V806.6H299.1V809.9H301.1V810.5H303.1V813.1H305.1V813.0H307.1V813.6H309.1V814.9H311.6V810.3H314.1V807.4H316.6V812.6H319.1V819.9H321.2V826.0H323.2V830.7H325.3V834.8H327.4V827.7H329.4V822.7H331.5V817.4H333.5V812.8H335.5V808.4H337.5V803.5H339.5V800.5H341.5V794.9H343.4V805.7H345.3V817.4H347.1V805.0H349.0V792.4H351.5V798.6H354.0V802.4H355.9V807.8H357.7V812.3H359.5V816.9H361.4V822.3H363.9V818.3H366.4V814.9H368.3V795.3H370.2V775.0H372.0V798.3H373.9V819.9H375.8V815.5H377.6V812.0H379.5V808.3H381.4V804.9H383.9V814.5H386.4V824.8H388.3V827.2H390.1V827.4H392.0V827.9H393.9V829.8H396.0V829.7H398.0V831.5H400.1V830.1H402.2V832.0H404.2V830.5H406.3V832.3H408.8V838.9H411.3V847.3H414.1V847.8H416.6V845.6H419.2V845.8H421.2V842.6H423.2V837.7H425.8V840.3H428.3V844.8H430.4V861.1H432.4V848.9H434.4V852.2H436.5V857.0H438.5V860.9H440.5V867.2H443.6V873.3H445.4V871.2H447.3V871.1H449.1V869.7H451.0V868.8H452.8V866.2H455.3V874.1H457.8V879.4H460.2V877.2H462.6V875.8H465.0V872.3H467.6V879.8H470.1V889.6H472.5V885.4H474.8V878.5H477.2V873.3H479.2V870.4H481.3V869.2H483.3V869.4H485.4V869.2H487.4V867.4H489.4V867.2H491.4V869.1H493.5V873.3H495.5V859.0H497.6V871.2H499.6V881.4H501.6V883.8H503.7V885.1H505.7V886.5H507.8V883.8H509.8V878.4H511.8V878.1H513.9V879.2H515.9V881.4H517.7V878.7H519.5V876.8H521.4V877.1H523.2V875.3H525.0V873.3H526.8V873.2H528.7V874.4H530.5V875.5H532.4V877.7H534.2V878.4H536.2V880.9H538.3V883.8H540.3V884.5H542.3V882.1H544.4V880.4H546.4V885.8H548.5V888.3H550.5V892.6H552.5V889.9H554.6V887.2H556.6V885.5H558.6V882.7H560.7V882.8H562.7V880.8H564.7V877.4H566.8V880.5H568.8V882.5H570.8V881.6H572.9V881.6H574.9V882.5H578.0V890.6H580.5V886.1H583.0V883.5H585.0V885.1H587.1V888.2H589.2V888.3H591.2V891.6H593.2V891.7H595.2V892.1H597.3V890.3H599.3V891.6H602.4V885.5H605.4V894.7H607.5V892.5H609.5V890.6H611.5V894.7H613.6V897.4H615.7V900.4H617.7V903.8H619.7V902.3H621.7V898.7H623.8V898.7H625.8V897.7H627.9V897.7H629.9V897.7H631.9V897.9H634.0V896.7H636.0V895.8H638.0V893.6H640.0V897.9H642.1V900.8H644.1V905.9H646.1V898.2H648.2V892.0H650.2V885.5H652.2V891.5H654.3V895.0H656.3V901.8H658.8V896.5H661.4V889.6H663.8V894.5H666.1V897.8H668.5V901.8H670.6V905.1H672.6V912.1H674.7V916.0H676.7V923.9H678.7V932.3H680.8V929.7H682.8V926.2H684.8V928.4H686.9V930.9H688.9V932.3H690.9V926.6H693.0V922.7H695.0V916.0H697.0V915.8H699.1V914.2H701.2V911.7H703.2V909.9H705.2V909.4H707.3V909.6H709.3V909.9H711.3V903.2H713.4V898.8H715.4V891.6H718.0V884.3H720.5V875.3H722.5V885.3H724.5V893.6H726.3V893.5H728.1V893.0H729.9V891.1H731.7V889.6H733.7V885.7H735.8V883.5H737.8V879.4H739.8V878.2H741.8V878.7H743.9V876.9H745.9V877.4H748.0V873.8H750.0V868.2H752.0V863.0H754.1V859.0H756.1V862.2H758.2V861.9H760.2V865.1H762.2V864.3H764.2V861.1H766.3V893.6H768.3V893.5H770.3V891.0H772.4V891.9H774.4V890.6H776.4V889.6H778.5V890.0H780.5V888.4H782.6V887.5H784.6V887.0H786.7V888.2H788.7V885.6H790.7V886.5H792.8V893.9H794.8V899.8H796.8V904.1H798.9V910.0H800.9V916.0H802.9V911.2H805.0V909.6H807.0V904.8H809.0V909.7H811.1V915.6H813.1V920.1H815.1V918.7H817.2V919.3H819.2V918.0H822.2V913.3H824.2V908.9H826.3V902.6H828.3V899.0H831.4V913.3H834.0V914.3H836.5V915.3H838.5V912.9H840.5V909.2H842.5V910.4H844.6V913.7H846.6V915.3H848.7V880.7H850.7V882.8H852.8V885.8H854.8V888.9H856.8V894.1H858.9V897.0H860.9V899.6H863.0V901.1H865.0V901.1H867.0V907.0H869.0V913.3H871.0V908.7H873.1V904.6H875.1V899.0H877.2V899.1H879.2V897.5H881.3V897.0H883.3V899.4H885.4V899.5H887.4V901.1H889.4V898.3H891.4V892.9H893.4V889.5H895.5V885.1H897.5V882.8H899.5V882.4H901.6V880.7H903.6V875.3H905.7V872.4H907.7V867.5H909.7V870.0H911.8V876.3H913.8V878.7H915.8V879.8H917.9V881.4H920.0V880.7H922.0V882.8H924.0V885.2H926.1V886.5H928.1V888.9H931.1V905.1H933.7V899.3H936.2V895.0H938.8V891.8H941.3V886.8H943.8V894.6H946.4V905.1H948.4V905.0H950.5V903.9H952.5V905.1H954.5V913.2H956.6V919.4H958.6V882.8H961.2V898.2H963.7V911.3H966.8V899.0H968.8V893.0H970.9V889.4H972.9V884.8H974.9V886.8H976.9V888.9H978.7V891.0H980.5V892.6H982.3V893.0H984.1V895.0H986.7V893.2H989.2V888.9H991.2V886.7H993.3V885.1H995.3V884.8H997.3V887.7H999.3V887.8H1001.4V890.0H1003.4V892.9H1005.4V893.7H1007.5V894.0H1009.5V894.3H1011.5V896.0H1013.6V900.9H1015.6V903.4H1017.7V907.2H1019.7V908.5H1021.8V907.5H1023.8V909.9H1025.8V909.2H1027.8V917.4H1029.8V913.9H1031.9V913.1H1033.9V909.2H1036.5V910.6H1039.0V911.3H1040.0V895.0H1042.0V890.2H1044.1V882.8H1046.2V880.5H1048.2V876.6H1051.2V888.9H1053.0V890.3H1054.8V891.0H1056.6V892.9H1058.4V892.9H1060.4V893.8H1062.4V895.0H1064.5V884.7H1066.5V876.6H1068.5V877.1H1070.6V876.1H1072.6V874.6H1074.7V890.9H1076.7V887.3H1078.8V883.5H1080.8V878.7H1082.8V882.0H1084.9V886.7H1086.9V890.9H1088.9V896.5H1091.0V901.7H1093.0V905.1H1095.0V923.5H1097.0V925.2H1099.1V923.5H1101.2V925.5H1103.2V925.5H1105.2V920.6H1107.2V915.3H1109.2V916.6H1111.3V917.4H1113.4V918.9H1115.4V921.4H1117.4V914.2H1119.4V907.2H1121.5V910.2H1123.5V913.3H1125.5V909.6H1127.6V907.2H1129.6V906.8H1131.7V907.4H1133.7V907.9H1135.7V907.2H1137.8V902.4H1139.8V897.0H1141.8V898.1H1143.9V902.1H1146.0V902.7H1148.0V905.1H1150.0V903.7H1152.1V901.0H1154.1V897.0H1156.1V909.2H1158.1V909.2H1160.2V911.5H1162.2V913.6H1164.2V913.3H1166.2V914.0H1168.3V915.5H1170.4V915.9H1172.4V917.4H1174.4V915.7H1176.5V915.9H1178.5V915.3H1180.5V915.4H1182.6V916.0H1184.6V915.3H1186.6V929.6H1188.6V928.6H1190.7V928.4H1192.7V926.5H1194.8V924.3H1196.8V923.5H1198.8V931.9H1200.9V937.7H1202.9V937.6H1205.0V936.8H1207.0V937.2H1209.0V935.7H1210.8V939.2H1212.6V941.4H1214.5V945.1H1216.3V947.3H1218.1V950.9H1221.2V946.8H1224.3V961.1H1226.3V960.9H1228.3V958.0H1230.3V957.6H1232.4V960.0H1234.4V959.0H1236.5V961.4H1238.5V966.2H1240.5V965.1H1242.5V966.8H1244.6V966.1H1246.6V967.2H1249.7V949.9H1252.8V967.2H1255.8V977.4H1257.8V974.7H1259.9V970.9H1261.9V969.2H1264.3V972.2H1266.6V973.7H1269.0V975.3H1271.0V983.0H1273.1V989.6H1275.2V985.7H1277.2V979.4H1279.2V984.8H1281.3V988.0H1283.3V991.6H1285.8V994.7H1288.4V996.7H1291.0V990.7H1293.5V987.5H1295.9V987.3H1298.2V989.4H1300.6V990.6H1303.2V982.3H1305.7V971.3H1307.7V975.5H1309.8V981.0H1311.8V985.5H1314.8V1003.8H1316.8V989.2H1318.9V977.4H1321.3V981.9H1323.6V988.0H1326.0V991.6H1328.0V994.9H1330.1V997.7H1332.2V991.5H1334.2V983.5H1336.2V983.7H1338.2V985.7H1340.3V987.2H1342.3V989.6H1344.3V985.4H1346.4V979.4H1348.8V974.9H1351.1V973.8H1353.5V969.2H1356.6V987.5H1358.6V996.3H1360.7V1007.6H1362.7V1016.0H1364.7V1016.0H1366.8V1015.5H1368.8V1016.0H1370.8V1008.2H1372.9V997.7H1374.9V994.9H1376.9V992.6H1379.0V999.8H1381.0V1005.9H1382.0V1030.3H1384.5V1023.0H1387.1V1018.1H1389.1V1018.3H1391.2V1018.0H1393.2V1016.0H1396.3V1003.8H1398.8V1001.2H1401.4V1000.8H1403.4V1005.0H1405.4V1007.9H1407.4V1001.8H1409.5V996.0H1411.5V991.6H1413.5V983.6H1415.6V976.3H1417.6V981.9H1419.7V987.8H1421.7V991.6H1423.8V988.9H1425.8V983.5H1428.3V995.0H1430.9V1003.8H1433.3V1001.4H1435.6V998.8H1438.0V995.7H1440.0V1001.5H1442.1V1009.9H1444.1V1016.0H1446.1V1017.2H1448.2V1017.7H1450.2V1020.2H1452.3V1020.1H1455.3V1030.3H1457.8V1021.5H1460.4V1014.0H1462.4V1015.0H1464.5V1017.1H1466.5V1019.1H1468.5V1022.1H1470.5V1018.5H1472.6V1015.3H1474.7V1009.7H1476.7V1006.9H1478.7V1010.5H1480.8V1014.2H1482.8V1017.7H1484.8V1021.1H1486.8V1021.6H1488.9V1022.8H1491.0V1022.1H1493.0V1024.2H1495.0V1025.7H1497.1V1029.4H1499.1V1032.3H1501.1V1029.5H1503.2V1029.0H1505.2V1026.2H1506.2V997.7H1508.8V997.0H1511.3V997.7H1513.3V1005.9H1515.3V1004.8H1517.4V1001.1H1519.5V998.6H1521.5V997.7H1524.5V1005.9H1527.0V999.7H1529.6V993.6H1531.6V996.7H1533.7V999.9H1535.7V1003.8H1537.8V1006.6H1539.8V1007.1H1541.9V1010.4H1543.9V1012.0H1545.7V1015.2H1547.5V1016.3H1549.4V1018.7H1551.2V1022.1H1553.0V1023.2H1554.8V1016.6H1556.6V1008.6H1558.4V1001.4H1560.2V995.7H1562.2V991.5H1564.2V989.1H1566.3V985.4H1568.3V983.9H1570.3V980.4H1572.3V991.9H1574.4V1003.8H1577.0V1007.4H1579.5V1012.0H1581.9V1009.0H1584.2V1007.1H1586.6V1002.8H1588.6V1004.4H1590.7V1006.4H1592.8V1009.2H1594.8V1012.0H1596.8V1009.8H1598.9V1009.7H1600.9V1007.5H1602.9V1005.0H1605.0V1002.6H1607.0V1001.8H1609.2V999.8H1611.5V999.3H1613.7V999.6H1616.3V1004.7H1618.9V1007.8H1621.9V1005.5H1624.2V1009.3H1626.8V1006.0H1629.4V1001.8H1631.6V1005.7H1633.8V1011.5H1636.0V1013.4H1638.3V1014.5H1640.2V1010.7H1642.0V1009.3H1643.9V1009.3H1645.8V1009.3H1647.7V1013.3H1649.5V1018.2H1651.3V1013.4H1653.2V1010.8H1655.5V1011.8H1657.7V1011.5H1659.9V1014.7H1662.1V1016.7H1664.1V1017.2H1666.1V1016.8H1668.1V1018.2H1670.3V1016.4H1672.6V1013.7H1675.2V1011.7H1677.8V1010.0H1679.8V1010.0H1681.7V1007.9H1683.7V1008.5H1686.3V1012.2H1689.0V1013.7H1690.8V1013.1H1692.7V1014.4H1694.6V1015.7H1696.4V1016.7H1698.7V1014.0H1700.9V1013.0H1702.9V1009.3H1704.8V1008.5H1706.8V1005.5H1708.7V1002.8H1710.6V997.4H1712.4V999.5H1714.3V1002.6H1716.5V1001.6H1718.8V1002.3H1721.0V1000.7H1723.2V1001.1H1725.5V1001.6H1727.7V1002.6H1729.7V999.6H1731.6V995.4H1733.6V992.1H1735.8V992.6H1738.1V995.1H1741.1V984.7H1743.1V984.2H1745.0V986.3H1747.0V986.9H1749.3V989.8H1751.5V991.1H1753.8V991.4H1756.0V985.5H1758.3V981.9H1760.5V977.2H1762.5V976.9H1764.4V975.9H1766.4V976.5H1769.4V978.7H1771.7V973.6H1773.9V967.6H1775.9V970.6H1777.8V974.4H1779.8V976.5H1782.8V975.8H1785.0V972.6H1787.3V970.5H1789.5V974.7H1791.7V976.5H1793.6V975.1H1795.5V972.0H1797.3V974.9H1799.2V978.0H1801.2V977.7H1803.1V979.4H1805.1V980.2H1807.4V996.6H1810.0V998.6H1812.6V1002.6H1815.6V995.9H1818.6V1006.3H1820.8V1001.6H1823.0V995.9H1825.6V996.5H1828.2V995.9H1830.5V1006.3H1832.5V1005.8H1834.4V1006.2H1836.4V1004.1H1839.4V989.2H1841.4V983.9H1843.4V981.8H1845.4V977.2H1848.3V960.9H1850.5V964.3H1852.8V966.1H1854.3V979.5H1856.5V973.6H1858.8V969.8H1861.0V976.8H1863.2V984.7H1865.3V985.8H1867.4V989.7H1869.5V992.5H1871.6V993.8H1873.7V996.6H1875.9V994.5H1878.1V991.4H1880.3V992.1H1882.6V993.6H1884.4V994.0H1886.3V992.6H1888.2V994.4H1890.0V992.9H1893.0V1002.6H1895.2V1004.7H1897.5V1005.7H1899.7V1009.3" fill="none" stroke="#ff0000" stroke-width="2.8" stroke-linejoin="miter" stroke-linecap="square"/></g>
<text x="75.2" y="385.8" class="ax" textLength="7.9" lengthAdjust="spacingAndGlyphs">0</text>
<text x="85.2" y="385.8" class="ax" textLength="7.9" lengthAdjust="spacingAndGlyphs">5</text>
<text x="123.2" y="385.8" class="ax bd" textLength="8.6" lengthAdjust="spacingAndGlyphs">0</text>
<text x="133.2" y="385.8" class="ax bd" textLength="8.6" lengthAdjust="spacingAndGlyphs">6</text>
<text x="169.2" y="385.8" class="ax" textLength="7.9" lengthAdjust="spacingAndGlyphs">0</text>
<text x="179.2" y="385.8" class="ax" textLength="7.9" lengthAdjust="spacingAndGlyphs">9</text>
<text x="265.2" y="385.8" class="ax" textLength="7.9" lengthAdjust="spacingAndGlyphs">1</text>
<text x="275.2" y="385.8" class="ax" textLength="7.9" lengthAdjust="spacingAndGlyphs">0</text>
<text x="359.2" y="385.8" class="ax" textLength="7.9" lengthAdjust="spacingAndGlyphs">1</text>
<text x="369.2" y="385.8" class="ax" textLength="7.9" lengthAdjust="spacingAndGlyphs">1</text>
<text x="454.2" y="385.8" class="ax" textLength="7.9" lengthAdjust="spacingAndGlyphs">1</text>
<text x="464.2" y="385.8" class="ax" textLength="7.9" lengthAdjust="spacingAndGlyphs">2</text>
<text x="547.2" y="385.8" class="ax" textLength="7.9" lengthAdjust="spacingAndGlyphs">1</text>
<text x="557.2" y="385.8" class="ax" textLength="7.9" lengthAdjust="spacingAndGlyphs">3</text>
<text x="642.2" y="385.8" class="ax" textLength="7.9" lengthAdjust="spacingAndGlyphs">1</text>
<text x="652.2" y="385.8" class="ax" textLength="7.9" lengthAdjust="spacingAndGlyphs">4</text>
<text x="737.2" y="385.8" class="ax" textLength="7.9" lengthAdjust="spacingAndGlyphs">1</text>
<text x="747.2" y="385.8" class="ax" textLength="7.9" lengthAdjust="spacingAndGlyphs">5</text>
<text x="801.2" y="385.8" class="ax" textLength="7.9" lengthAdjust="spacingAndGlyphs">1</text>
<text x="811.2" y="385.8" class="ax" textLength="7.9" lengthAdjust="spacingAndGlyphs">7</text>
<text x="894.2" y="385.8" class="ax" textLength="7.9" lengthAdjust="spacingAndGlyphs">1</text>
<text x="904.2" y="385.8" class="ax" textLength="7.9" lengthAdjust="spacingAndGlyphs">8</text>
<text x="987.2" y="385.8" class="ax" textLength="7.9" lengthAdjust="spacingAndGlyphs">1</text>
<text x="997.2" y="385.8" class="ax" textLength="7.9" lengthAdjust="spacingAndGlyphs">9</text>
<text x="1075.2" y="385.8" class="ax" textLength="7.9" lengthAdjust="spacingAndGlyphs">2</text>
<text x="1085.2" y="385.8" class="ax" textLength="7.9" lengthAdjust="spacingAndGlyphs">0</text>
<text x="1160.2" y="385.8" class="ax" textLength="7.9" lengthAdjust="spacingAndGlyphs">2</text>
<text x="1170.2" y="385.8" class="ax" textLength="7.9" lengthAdjust="spacingAndGlyphs">1</text>
<text x="1250.2" y="385.8" class="ax" textLength="7.9" lengthAdjust="spacingAndGlyphs">2</text>
<text x="1260.2" y="385.8" class="ax" textLength="7.9" lengthAdjust="spacingAndGlyphs">2</text>
<text x="1343.2" y="385.8" class="ax" textLength="7.9" lengthAdjust="spacingAndGlyphs">2</text>
<text x="1353.2" y="385.8" class="ax" textLength="7.9" lengthAdjust="spacingAndGlyphs">3</text>
<text x="1438.2" y="385.8" class="ax" textLength="7.9" lengthAdjust="spacingAndGlyphs">0</text>
<text x="1448.2" y="385.8" class="ax" textLength="7.9" lengthAdjust="spacingAndGlyphs">0</text>
<text x="1524.2" y="385.8" class="ax" textLength="7.9" lengthAdjust="spacingAndGlyphs">0</text>
<text x="1534.2" y="385.8" class="ax" textLength="7.9" lengthAdjust="spacingAndGlyphs">1</text>
<text x="1607.2" y="385.8" class="ax" textLength="7.9" lengthAdjust="spacingAndGlyphs">0</text>
<text x="1617.2" y="385.8" class="ax" textLength="7.9" lengthAdjust="spacingAndGlyphs">2</text>
<text x="1683.2" y="385.8" class="ax" textLength="7.9" lengthAdjust="spacingAndGlyphs">0</text>
<text x="1693.2" y="385.8" class="ax" textLength="7.9" lengthAdjust="spacingAndGlyphs">3</text>
<text x="1769.2" y="385.8" class="ax" textLength="7.9" lengthAdjust="spacingAndGlyphs">0</text>
<text x="1779.2" y="385.8" class="ax" textLength="7.9" lengthAdjust="spacingAndGlyphs">4</text>
<text x="1847.2" y="385.8" class="ax" textLength="7.9" lengthAdjust="spacingAndGlyphs">0</text>
<text x="1857.2" y="385.8" class="ax" textLength="7.9" lengthAdjust="spacingAndGlyphs">5</text>
<text x="1874.2" y="385.8" class="ax" textLength="7.9" lengthAdjust="spacingAndGlyphs">0</text>
<text x="1884.2" y="385.8" class="ax" textLength="7.9" lengthAdjust="spacingAndGlyphs">6</text>
<text x="1908.5" y="104.8" class="sc" textLength="56" lengthAdjust="spacingAndGlyphs">27,250</text>
<text x="1908.5" y="198.8" class="sc" textLength="56" lengthAdjust="spacingAndGlyphs">27,000</text>
<text x="1908.5" y="290.8" class="sc" textLength="56" lengthAdjust="spacingAndGlyphs">26,750</text>
<text x="1908.5" y="384.8" class="sc" textLength="56" lengthAdjust="spacingAndGlyphs">26,500</text>
<rect x="1906" y="158" width="93.5" height="34" fill="#d4d4d4"/>
<text x="1922" y="178" class="pl" textLength="59" lengthAdjust="spacingAndGlyphs">27,077</text>
<text x="13.3" y="95.2" class="info" style="font-size:18.5px" textLength="17.2" lengthAdjust="spacingAndGlyphs">時</text><text x="32.5" y="95.2" class="info" style="font-size:18.5px" textLength="17.2" lengthAdjust="spacingAndGlyphs">刻</text><text x="51.5" y="96" class="info" textLength="57.7" lengthAdjust="spacingAndGlyphs">:06:00</text><text x="119.1" y="95.2" class="info" style="font-size:18.5px" textLength="17.2" lengthAdjust="spacingAndGlyphs">始</text><text x="138.4" y="95.2" class="info" style="font-size:18.5px" textLength="17.2" lengthAdjust="spacingAndGlyphs">値</text><text x="157.3" y="96" class="info" textLength="67.3" lengthAdjust="spacingAndGlyphs">:27,077</text><text x="234.6" y="95.2" class="info" style="font-size:18.5px" textLength="17.2" lengthAdjust="spacingAndGlyphs">高</text><text x="253.8" y="95.2" class="info" style="font-size:18.5px" textLength="17.2" lengthAdjust="spacingAndGlyphs">値</text><text x="272.7" y="96" class="info" textLength="67.3" lengthAdjust="spacingAndGlyphs">:27,077</text><text x="350.0" y="95.2" class="info" style="font-size:18.5px" textLength="17.2" lengthAdjust="spacingAndGlyphs">安</text><text x="369.2" y="95.2" class="info" style="font-size:18.5px" textLength="17.2" lengthAdjust="spacingAndGlyphs">値</text><text x="388.2" y="96" class="info" textLength="67.3" lengthAdjust="spacingAndGlyphs">:27,077</text><text x="465.4" y="95.2" class="info" style="font-size:18.5px" textLength="17.2" lengthAdjust="spacingAndGlyphs">終</text><text x="484.7" y="95.2" class="info" style="font-size:18.5px" textLength="17.2" lengthAdjust="spacingAndGlyphs">値</text><text x="503.6" y="96" class="info" textLength="67.3" lengthAdjust="spacingAndGlyphs">:27,077</text>
<text x="152.5" y="362.8" class="mk" textLength="17.5" lengthAdjust="spacingAndGlyphs">09</text>
<text x="1440.5" y="362.8" class="mk" textLength="16.5" lengthAdjust="spacingAndGlyphs">10</text>
<text x="75.2" y="741.9" class="ax" textLength="7.9" lengthAdjust="spacingAndGlyphs">0</text>
<text x="85.2" y="741.9" class="ax" textLength="7.9" lengthAdjust="spacingAndGlyphs">5</text>
<text x="123.2" y="741.9" class="ax bd" textLength="8.6" lengthAdjust="spacingAndGlyphs">0</text>
<text x="133.2" y="741.9" class="ax bd" textLength="8.6" lengthAdjust="spacingAndGlyphs">6</text>
<text x="169.2" y="741.9" class="ax" textLength="7.9" lengthAdjust="spacingAndGlyphs">0</text>
<text x="179.2" y="741.9" class="ax" textLength="7.9" lengthAdjust="spacingAndGlyphs">9</text>
<text x="265.2" y="741.9" class="ax" textLength="7.9" lengthAdjust="spacingAndGlyphs">1</text>
<text x="275.2" y="741.9" class="ax" textLength="7.9" lengthAdjust="spacingAndGlyphs">0</text>
<text x="359.2" y="741.9" class="ax" textLength="7.9" lengthAdjust="spacingAndGlyphs">1</text>
<text x="369.2" y="741.9" class="ax" textLength="7.9" lengthAdjust="spacingAndGlyphs">1</text>
<text x="454.2" y="741.9" class="ax" textLength="7.9" lengthAdjust="spacingAndGlyphs">1</text>
<text x="464.2" y="741.9" class="ax" textLength="7.9" lengthAdjust="spacingAndGlyphs">2</text>
<text x="547.2" y="741.9" class="ax" textLength="7.9" lengthAdjust="spacingAndGlyphs">1</text>
<text x="557.2" y="741.9" class="ax" textLength="7.9" lengthAdjust="spacingAndGlyphs">3</text>
<text x="642.2" y="741.9" class="ax" textLength="7.9" lengthAdjust="spacingAndGlyphs">1</text>
<text x="652.2" y="741.9" class="ax" textLength="7.9" lengthAdjust="spacingAndGlyphs">4</text>
<text x="737.2" y="741.9" class="ax" textLength="7.9" lengthAdjust="spacingAndGlyphs">1</text>
<text x="747.2" y="741.9" class="ax" textLength="7.9" lengthAdjust="spacingAndGlyphs">5</text>
<text x="801.2" y="741.9" class="ax" textLength="7.9" lengthAdjust="spacingAndGlyphs">1</text>
<text x="811.2" y="741.9" class="ax" textLength="7.9" lengthAdjust="spacingAndGlyphs">7</text>
<text x="894.2" y="741.9" class="ax" textLength="7.9" lengthAdjust="spacingAndGlyphs">1</text>
<text x="904.2" y="741.9" class="ax" textLength="7.9" lengthAdjust="spacingAndGlyphs">8</text>
<text x="987.2" y="741.9" class="ax" textLength="7.9" lengthAdjust="spacingAndGlyphs">1</text>
<text x="997.2" y="741.9" class="ax" textLength="7.9" lengthAdjust="spacingAndGlyphs">9</text>
<text x="1075.2" y="741.9" class="ax" textLength="7.9" lengthAdjust="spacingAndGlyphs">2</text>
<text x="1085.2" y="741.9" class="ax" textLength="7.9" lengthAdjust="spacingAndGlyphs">0</text>
<text x="1160.2" y="741.9" class="ax" textLength="7.9" lengthAdjust="spacingAndGlyphs">2</text>
<text x="1170.2" y="741.9" class="ax" textLength="7.9" lengthAdjust="spacingAndGlyphs">1</text>
<text x="1250.2" y="741.9" class="ax" textLength="7.9" lengthAdjust="spacingAndGlyphs">2</text>
<text x="1260.2" y="741.9" class="ax" textLength="7.9" lengthAdjust="spacingAndGlyphs">2</text>
<text x="1343.2" y="741.9" class="ax" textLength="7.9" lengthAdjust="spacingAndGlyphs">2</text>
<text x="1353.2" y="741.9" class="ax" textLength="7.9" lengthAdjust="spacingAndGlyphs">3</text>
<text x="1438.2" y="741.9" class="ax" textLength="7.9" lengthAdjust="spacingAndGlyphs">0</text>
<text x="1448.2" y="741.9" class="ax" textLength="7.9" lengthAdjust="spacingAndGlyphs">0</text>
<text x="1524.2" y="741.9" class="ax" textLength="7.9" lengthAdjust="spacingAndGlyphs">0</text>
<text x="1534.2" y="741.9" class="ax" textLength="7.9" lengthAdjust="spacingAndGlyphs">1</text>
<text x="1607.2" y="741.9" class="ax" textLength="7.9" lengthAdjust="spacingAndGlyphs">0</text>
<text x="1617.2" y="741.9" class="ax" textLength="7.9" lengthAdjust="spacingAndGlyphs">2</text>
<text x="1683.2" y="741.9" class="ax" textLength="7.9" lengthAdjust="spacingAndGlyphs">0</text>
<text x="1693.2" y="741.9" class="ax" textLength="7.9" lengthAdjust="spacingAndGlyphs">3</text>
<text x="1769.2" y="741.9" class="ax" textLength="7.9" lengthAdjust="spacingAndGlyphs">0</text>
<text x="1779.2" y="741.9" class="ax" textLength="7.9" lengthAdjust="spacingAndGlyphs">4</text>
<text x="1847.2" y="741.9" class="ax" textLength="7.9" lengthAdjust="spacingAndGlyphs">0</text>
<text x="1857.2" y="741.9" class="ax" textLength="7.9" lengthAdjust="spacingAndGlyphs">5</text>
<text x="1874.2" y="741.9" class="ax" textLength="7.9" lengthAdjust="spacingAndGlyphs">0</text>
<text x="1884.2" y="741.9" class="ax" textLength="7.9" lengthAdjust="spacingAndGlyphs">6</text>
<text x="1908.5" y="516.8" class="sc" textLength="56" lengthAdjust="spacingAndGlyphs">10,750</text>
<text x="1908.5" y="611.8" class="sc" textLength="56" lengthAdjust="spacingAndGlyphs">10,500</text>
<text x="1908.5" y="706.8" class="sc" textLength="56" lengthAdjust="spacingAndGlyphs">10,250</text>
<rect x="1906" y="408" width="93.5" height="34" fill="#d4d4d4"/>
<text x="1922" y="428" class="pl" textLength="59" lengthAdjust="spacingAndGlyphs">11,009</text>
<text x="13.3" y="423.2" class="info" style="font-size:18.5px" textLength="17.2" lengthAdjust="spacingAndGlyphs">時</text><text x="32.5" y="423.2" class="info" style="font-size:18.5px" textLength="17.2" lengthAdjust="spacingAndGlyphs">刻</text><text x="51.5" y="424" class="info" textLength="57.7" lengthAdjust="spacingAndGlyphs">:06:00</text><text x="119.1" y="423.2" class="info" style="font-size:18.5px" textLength="17.2" lengthAdjust="spacingAndGlyphs">始</text><text x="138.4" y="423.2" class="info" style="font-size:18.5px" textLength="17.2" lengthAdjust="spacingAndGlyphs">値</text><text x="157.3" y="424" class="info" textLength="67.3" lengthAdjust="spacingAndGlyphs">:11,009</text><text x="234.6" y="423.2" class="info" style="font-size:18.5px" textLength="17.2" lengthAdjust="spacingAndGlyphs">高</text><text x="253.8" y="423.2" class="info" style="font-size:18.5px" textLength="17.2" lengthAdjust="spacingAndGlyphs">値</text><text x="272.7" y="424" class="info" textLength="67.3" lengthAdjust="spacingAndGlyphs">:11,009</text><text x="350.0" y="423.2" class="info" style="font-size:18.5px" textLength="17.2" lengthAdjust="spacingAndGlyphs">安</text><text x="369.2" y="423.2" class="info" style="font-size:18.5px" textLength="17.2" lengthAdjust="spacingAndGlyphs">値</text><text x="388.2" y="424" class="info" textLength="67.3" lengthAdjust="spacingAndGlyphs">:11,009</text><text x="465.4" y="423.2" class="info" style="font-size:18.5px" textLength="17.2" lengthAdjust="spacingAndGlyphs">終</text><text x="484.7" y="423.2" class="info" style="font-size:18.5px" textLength="17.2" lengthAdjust="spacingAndGlyphs">値</text><text x="503.6" y="424" class="info" textLength="67.3" lengthAdjust="spacingAndGlyphs">:11,009</text>
<text x="152.5" y="719.5" class="mk" textLength="17.5" lengthAdjust="spacingAndGlyphs">09</text>
<text x="1440.5" y="719.5" class="mk" textLength="16.5" lengthAdjust="spacingAndGlyphs">10</text>
<text x="75.2" y="1063.8" class="ax" textLength="7.9" lengthAdjust="spacingAndGlyphs">0</text>
<text x="85.2" y="1063.8" class="ax" textLength="7.9" lengthAdjust="spacingAndGlyphs">5</text>
<text x="123.2" y="1063.8" class="ax bd" textLength="8.6" lengthAdjust="spacingAndGlyphs">0</text>
<text x="133.2" y="1063.8" class="ax bd" textLength="8.6" lengthAdjust="spacingAndGlyphs">6</text>
<text x="169.2" y="1063.8" class="ax" textLength="7.9" lengthAdjust="spacingAndGlyphs">0</text>
<text x="179.2" y="1063.8" class="ax" textLength="7.9" lengthAdjust="spacingAndGlyphs">9</text>
<text x="265.2" y="1063.8" class="ax" textLength="7.9" lengthAdjust="spacingAndGlyphs">1</text>
<text x="275.2" y="1063.8" class="ax" textLength="7.9" lengthAdjust="spacingAndGlyphs">0</text>
<text x="359.2" y="1063.8" class="ax" textLength="7.9" lengthAdjust="spacingAndGlyphs">1</text>
<text x="369.2" y="1063.8" class="ax" textLength="7.9" lengthAdjust="spacingAndGlyphs">1</text>
<text x="454.2" y="1063.8" class="ax" textLength="7.9" lengthAdjust="spacingAndGlyphs">1</text>
<text x="464.2" y="1063.8" class="ax" textLength="7.9" lengthAdjust="spacingAndGlyphs">2</text>
<text x="547.2" y="1063.8" class="ax" textLength="7.9" lengthAdjust="spacingAndGlyphs">1</text>
<text x="557.2" y="1063.8" class="ax" textLength="7.9" lengthAdjust="spacingAndGlyphs">3</text>
<text x="642.2" y="1063.8" class="ax" textLength="7.9" lengthAdjust="spacingAndGlyphs">1</text>
<text x="652.2" y="1063.8" class="ax" textLength="7.9" lengthAdjust="spacingAndGlyphs">4</text>
<text x="737.2" y="1063.8" class="ax" textLength="7.9" lengthAdjust="spacingAndGlyphs">1</text>
<text x="747.2" y="1063.8" class="ax" textLength="7.9" lengthAdjust="spacingAndGlyphs">5</text>
<text x="801.2" y="1063.8" class="ax" textLength="7.9" lengthAdjust="spacingAndGlyphs">1</text>
<text x="811.2" y="1063.8" class="ax" textLength="7.9" lengthAdjust="spacingAndGlyphs">7</text>
<text x="894.2" y="1063.8" class="ax" textLength="7.9" lengthAdjust="spacingAndGlyphs">1</text>
<text x="904.2" y="1063.8" class="ax" textLength="7.9" lengthAdjust="spacingAndGlyphs">8</text>
<text x="987.2" y="1063.8" class="ax" textLength="7.9" lengthAdjust="spacingAndGlyphs">1</text>
<text x="997.2" y="1063.8" class="ax" textLength="7.9" lengthAdjust="spacingAndGlyphs">9</text>
<text x="1075.2" y="1063.8" class="ax" textLength="7.9" lengthAdjust="spacingAndGlyphs">2</text>
<text x="1085.2" y="1063.8" class="ax" textLength="7.9" lengthAdjust="spacingAndGlyphs">0</text>
<text x="1160.2" y="1063.8" class="ax" textLength="7.9" lengthAdjust="spacingAndGlyphs">2</text>
<text x="1170.2" y="1063.8" class="ax" textLength="7.9" lengthAdjust="spacingAndGlyphs">1</text>
<text x="1250.2" y="1063.8" class="ax" textLength="7.9" lengthAdjust="spacingAndGlyphs">2</text>
<text x="1260.2" y="1063.8" class="ax" textLength="7.9" lengthAdjust="spacingAndGlyphs">2</text>
<text x="1343.2" y="1063.8" class="ax" textLength="7.9" lengthAdjust="spacingAndGlyphs">2</text>
<text x="1353.2" y="1063.8" class="ax" textLength="7.9" lengthAdjust="spacingAndGlyphs">3</text>
<text x="1438.2" y="1063.8" class="ax" textLength="7.9" lengthAdjust="spacingAndGlyphs">0</text>
<text x="1448.2" y="1063.8" class="ax" textLength="7.9" lengthAdjust="spacingAndGlyphs">0</text>
<text x="1524.2" y="1063.8" class="ax" textLength="7.9" lengthAdjust="spacingAndGlyphs">0</text>
<text x="1534.2" y="1063.8" class="ax" textLength="7.9" lengthAdjust="spacingAndGlyphs">1</text>
<text x="1607.2" y="1063.8" class="ax" textLength="7.9" lengthAdjust="spacingAndGlyphs">0</text>
<text x="1617.2" y="1063.8" class="ax" textLength="7.9" lengthAdjust="spacingAndGlyphs">2</text>
<text x="1683.2" y="1063.8" class="ax" textLength="7.9" lengthAdjust="spacingAndGlyphs">0</text>
<text x="1693.2" y="1063.8" class="ax" textLength="7.9" lengthAdjust="spacingAndGlyphs">3</text>
<text x="1769.2" y="1063.8" class="ax" textLength="7.9" lengthAdjust="spacingAndGlyphs">0</text>
<text x="1779.2" y="1063.8" class="ax" textLength="7.9" lengthAdjust="spacingAndGlyphs">4</text>
<text x="1847.2" y="1063.8" class="ax" textLength="7.9" lengthAdjust="spacingAndGlyphs">0</text>
<text x="1857.2" y="1063.8" class="ax" textLength="7.9" lengthAdjust="spacingAndGlyphs">5</text>
<text x="1874.2" y="1063.8" class="ax" textLength="7.9" lengthAdjust="spacingAndGlyphs">0</text>
<text x="1884.2" y="1063.8" class="ax" textLength="7.9" lengthAdjust="spacingAndGlyphs">6</text>
<text x="1908.5" y="835.8" class="sc" textLength="56" lengthAdjust="spacingAndGlyphs">16,500</text>
<text x="1908.5" y="932.8" class="sc" textLength="56" lengthAdjust="spacingAndGlyphs">16,250</text>
<text x="1908.5" y="1032.8" class="sc" textLength="56" lengthAdjust="spacingAndGlyphs">16,000</text>
<rect x="1906" y="995" width="93.5" height="34" fill="#d4d4d4"/>
<text x="1922" y="1015" class="pl" textLength="59" lengthAdjust="spacingAndGlyphs">16,068</text>
<text x="13.0" y="780" class="info" textLength="9.6" lengthAdjust="spacingAndGlyphs">[</text><text x="22.9" y="779.2" class="info" style="font-size:18.5px" textLength="17.2" lengthAdjust="spacingAndGlyphs">金</text><text x="51.5" y="780" class="info" textLength="115.4" lengthAdjust="spacingAndGlyphs">27/02 27,077</text><text x="167.2" y="779.2" class="info" style="font-size:18.5px" textLength="17.2" lengthAdjust="spacingAndGlyphs">×</text><text x="186.2" y="780" class="info" textLength="48.1" lengthAdjust="spacingAndGlyphs">1.00]</text><text x="234.6" y="779.2" class="info" style="font-size:18.5px" textLength="17.2" lengthAdjust="spacingAndGlyphs">−</text><text x="253.5" y="780" class="info" textLength="9.6" lengthAdjust="spacingAndGlyphs">[</text><text x="263.4" y="779.2" class="info" style="font-size:18.5px" textLength="17.2" lengthAdjust="spacingAndGlyphs">白</text><text x="282.7" y="779.2" class="info" style="font-size:18.5px" textLength="17.2" lengthAdjust="spacingAndGlyphs">金</text><text x="311.2" y="780" class="info" textLength="115.4" lengthAdjust="spacingAndGlyphs">27/02 11,009</text><text x="427.0" y="779.2" class="info" style="font-size:18.5px" textLength="17.2" lengthAdjust="spacingAndGlyphs">×</text><text x="445.9" y="780" class="info" textLength="48.1" lengthAdjust="spacingAndGlyphs">1.00]</text><text x="503.9" y="779.2" class="info" style="font-size:18.5px" textLength="17.2" lengthAdjust="spacingAndGlyphs">終</text><text x="523.2" y="779.2" class="info" style="font-size:18.5px" textLength="17.2" lengthAdjust="spacingAndGlyphs">値</text><text x="552.0" y="779.2" class="info" style="font-size:18.5px" textLength="17.2" lengthAdjust="spacingAndGlyphs">時</text><text x="571.3" y="779.2" class="info" style="font-size:18.5px" textLength="17.2" lengthAdjust="spacingAndGlyphs">刻</text><text x="590.2" y="780" class="info" textLength="125.1" lengthAdjust="spacingAndGlyphs">:06:00 16,068</text>
<text x="152.5" y="1040" class="mk" textLength="17.5" lengthAdjust="spacingAndGlyphs">09</text>
<text x="1440.5" y="1040" class="mk" textLength="16.5" lengthAdjust="spacingAndGlyphs">10</text>
</svg>
</body></html>
